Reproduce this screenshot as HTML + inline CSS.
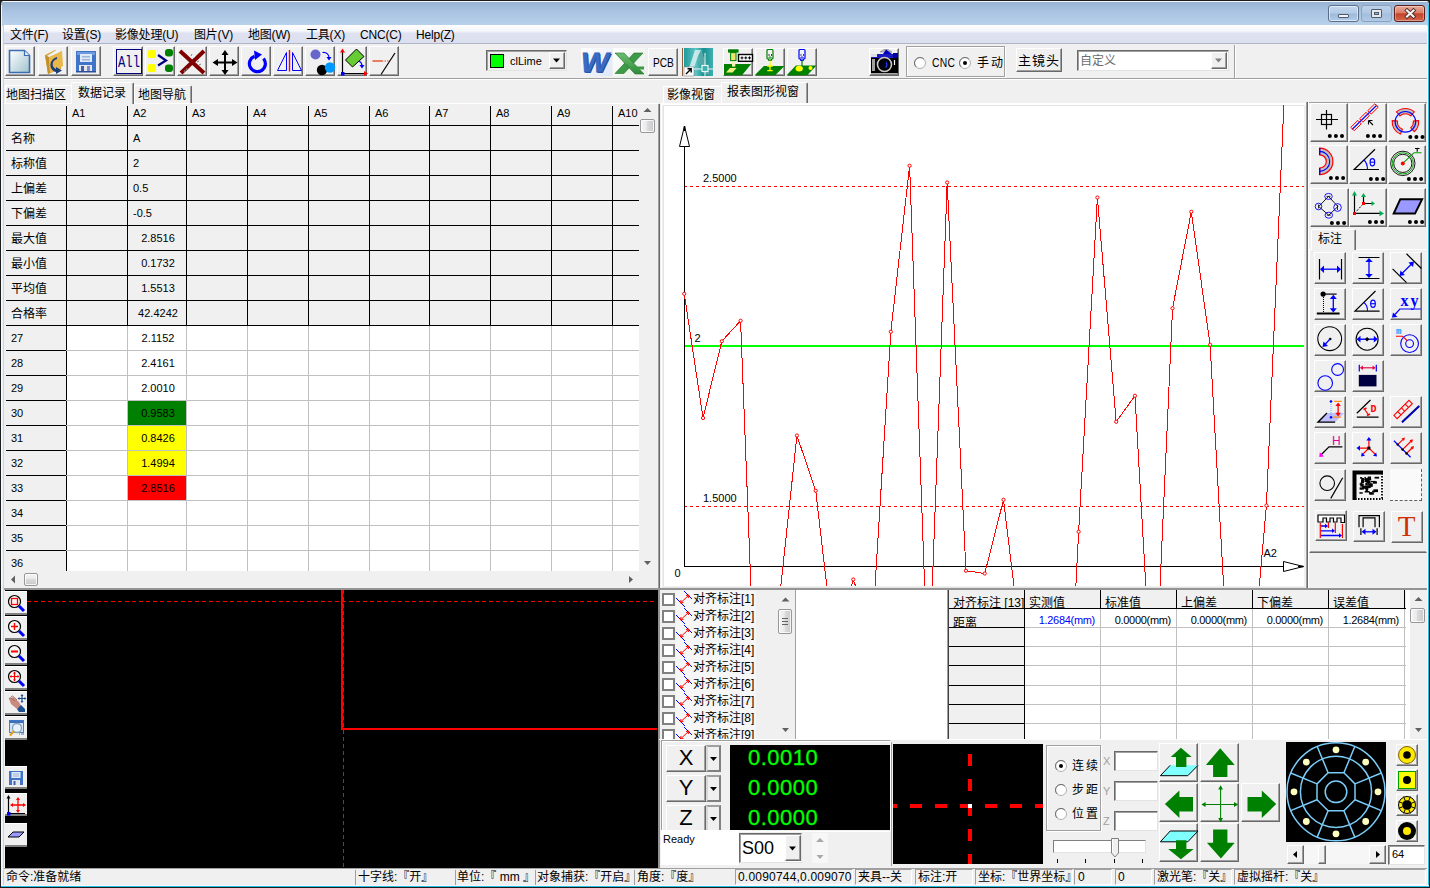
<!DOCTYPE html><html lang="zh"><head><meta charset="utf-8"><title>UI</title><style>
*{box-sizing:border-box;margin:0;padding:0}
html,body{width:1430px;height:888px;overflow:hidden}
body{position:relative;background:#f0f0f0;font-family:"Liberation Sans","Noto Sans CJK SC",sans-serif;font-size:12px;color:#000;line-height:1}
.a{position:absolute}
.t{position:absolute;white-space:nowrap;line-height:1}
.btn{position:absolute;background:#f0f0f0;border:1px solid;border-color:#fff #696969 #696969 #fff;box-shadow:inset -1px -1px 0 #a0a0a0}
.btn svg{position:absolute}
.sunk{position:absolute;border:1px solid;border-color:#a0a0a0 #fff #fff #a0a0a0}
svg{position:absolute;overflow:visible}
</style></head><body><div class="a" style="left:0px;top:0px;width:1430px;height:888px;background:#f0f0f0"></div><div class="a" style="left:0px;top:0px;width:1430px;height:8px;background:#1c1c1c"></div><div class="a" style="left:0px;top:0px;width:1430px;height:26px;background:linear-gradient(#1c1c1c 0,#1c1c1c 1px,#f4f8fc 1px,#f4f8fc 2px,#98b3d3 2px,#a9c3e1 45%,#bad2eb);border-radius:6px 6px 0 0"></div><div class="a" style="left:0px;top:0px;width:1px;height:888px;background:#1c1c1c"></div><div class="a" style="left:1px;top:5px;width:1px;height:21px;background:#f4f8fc"></div><div class="a" style="left:1px;top:26px;width:2px;height:862px;background:linear-gradient(90deg,#ffffff,#e4edf8)"></div><div class="a" style="left:3px;top:26px;width:1px;height:862px;background:#c3d5ea"></div><div class="a" style="left:1427px;top:26px;width:1px;height:862px;background:#f4f8fd"></div><div class="a" style="left:1428px;top:5px;width:1px;height:883px;background:#27c0e4"></div><div class="a" style="left:1429px;top:0px;width:1px;height:888px;background:#1c1c1c"></div><div class="a" style="left:1px;top:885px;width:1428px;height:1px;background:#f4f8fd"></div><div class="a" style="left:1px;top:886px;width:1428px;height:1px;background:#27c0e4"></div><div class="a" style="left:0px;top:887px;width:1430px;height:1px;background:#1c1c1c"></div><div class="a" style="left:1328px;top:5px;width:31px;height:17px;border:1px solid #5a6f8c;border-radius:3px;background:linear-gradient(#c3d6ec 0%,#b4cbe6 48%,#9dbadb 52%,#b2cae6 100%);box-shadow:inset 0 0 0 1px rgba(255,255,255,.55)"></div><div class="a" style="left:1338px;top:14px;width:11px;height:4px;background:#f4f4f4;border:1px solid #4a5a70;border-radius:1px"></div><div class="a" style="left:1361px;top:5px;width:31px;height:17px;border:1px solid #8aa2c0;border-radius:3px;background:linear-gradient(#bcd0e8 0%,#b0c7e3 48%,#a3bddc 52%,#b2cae6 100%)"></div><div class="a" style="left:1371px;top:9px;width:11px;height:9px;background:#e8e8e8;border:1px solid #4a5a70;border-radius:1px"></div><div class="a" style="left:1374px;top:12px;width:5px;height:3px;background:#9ab4d4;border:1px solid #4a5a70"></div><div class="a" style="left:1394px;top:5px;width:31px;height:17px;border:1px solid #5b1f1c;border-radius:3px;background:linear-gradient(#e9a99b 0%,#d9806c 45%,#c5422a 52%,#d4674c 100%);box-shadow:inset 0 0 0 1px rgba(255,255,255,.35)"></div><svg class="a" style="left:1403px;top:8px" width="14" height="11" viewBox="0 0 14 11" ><path d="M4 2.500 L10.500 8.500 M10.500 2.500 L4 8.500" stroke="#4a2a28" stroke-width="3.800" stroke-linecap="square"/><path d="M4 2.500 L10.500 8.500 M10.500 2.500 L4 8.500" stroke="#f4f4f4" stroke-width="2.200" stroke-linecap="square"/></svg><div class="a" style="left:4px;top:25px;width:1423px;height:19px;background:linear-gradient(#ffffff 0%,#f4f5fb 35%,#dfe2f0 45%,#dcdfee 100%);border-bottom:1px solid #b0b4c8"></div><div class="t" style="left:10px;top:29px;font-size:12px;letter-spacing:-.2px">文件(F)</div><div class="t" style="left:62px;top:29px;font-size:12px;letter-spacing:-.2px">设置(S)</div><div class="t" style="left:115px;top:29px;font-size:12px;letter-spacing:-.2px">影像处理(U)</div><div class="t" style="left:194px;top:29px;font-size:12px;letter-spacing:-.2px">图片(V)</div><div class="t" style="left:248px;top:29px;font-size:12px;letter-spacing:-.2px">地图(W)</div><div class="t" style="left:306px;top:29px;font-size:12px;letter-spacing:-.2px">工具(X)</div><div class="t" style="left:360px;top:29px;font-size:12px;letter-spacing:-.2px">CNC(C)</div><div class="t" style="left:416px;top:29px;font-size:12px;letter-spacing:-.2px">Help(Z)</div><div class="a" style="left:4px;top:78px;width:1423px;height:1px;background:#a0a0a0"></div><div class="a" style="left:4px;top:79px;width:1423px;height:1px;background:#ffffff"></div><div class="btn" style="left:5px;top:46px;width:30px;height:30px;"><svg style="left:-1px;top:-1px" width="30" height="30" viewBox="0 0 30 30" ><defs><linearGradient id="gdoc" x1="0" y1="0" x2="1" y2="1"><stop offset="0" stop-color="#ffffff"/><stop offset="1" stop-color="#9fc3cc"/></linearGradient></defs><path d="M4.5 4.5 H19.5 L24.5 9.5 V26.5 H4.5 Z" fill="url(#gdoc)" stroke="#3b6cb3" stroke-width="1.6"/><path d="M19.5 4.5 V9.5 H24.5" fill="#e8f2f6" stroke="#3b6cb3" stroke-width="1.2"/></svg></div><div class="btn" style="left:38px;top:46px;width:30px;height:30px;"><svg style="left:-1px;top:-1px" width="30" height="30" viewBox="0 0 30 30" ><path d="M7 9 L17 4 L24 6 L23 23 L10 28 Z" fill="#d9a63a"/><path d="M9 10 L20 3 L22 5 L21 22 L11 27 Z" fill="#eef3fa"/><path d="M11 11 L24 5 L25 20 L12 27 Z" fill="#e9b84a"/><path d="M7 9 L10 28 L12 27 L11 11 Z" fill="#c48f2a"/><path d="M19 13 C14 14 13 21 18 23 L18 21 L24 24.5 L18 28 L18 26 C10 24 11 13 19 11 Z" fill="#1f3f7a"/></svg></div><div class="btn" style="left:71px;top:46px;width:30px;height:30px;"><svg style="left:-1px;top:-1px" width="30" height="30" viewBox="0 0 30 30" ><rect x="5" y="5" width="20" height="21" fill="#3f74c8"/><rect x="6" y="6" width="18" height="3" fill="#6b9ae0"/><rect x="9" y="8" width="12" height="8" fill="#dfe9f7"/><rect x="11" y="10" width="8" height="1.5" fill="#9db4d6"/><rect x="11" y="13" width="8" height="1.5" fill="#9db4d6"/><rect x="8" y="19" width="13" height="7" fill="#e6e6ee"/><rect x="10" y="20" width="3" height="6" fill="#3f5fa8"/><rect x="16" y="20" width="3" height="6" fill="#7a8fc0"/><rect x="5" y="25" width="20" height="1.5" fill="#2b4f9a"/></svg></div><div class="btn" style="left:113px;top:46px;width:30px;height:30px;"><svg style="left:-1px;top:-1px" width="30" height="30" viewBox="0 0 30 30" ><rect x="3.5" y="3.5" width="25" height="24" fill="none" stroke="#000080" stroke-width="1"/><text x="16" y="21" font-family="Liberation Mono,monospace" font-size="16" fill="#000080" text-anchor="middle" textLength="22" lengthAdjust="spacingAndGlyphs">All</text></svg></div><div class="btn" style="left:145px;top:46px;width:30px;height:30px;"><svg style="left:-1px;top:-1px" width="30" height="30" viewBox="0 0 30 30" ><rect x="3" y="4" width="8" height="8" rx="1.5" fill="#ffff00"/><rect x="3" y="18" width="8" height="8" rx="1.5" fill="#ffff00"/><rect x="20" y="3" width="8" height="7.5" rx="3" fill="#008000"/><rect x="20" y="18.5" width="8" height="7.5" rx="3" fill="#008000"/><path d="M13 9 L21 14.5 L13 19.5" fill="none" stroke="#000080" stroke-width="2.2"/></svg></div><div class="btn" style="left:177px;top:46px;width:30px;height:30px;"><svg style="left:-1px;top:-1px" width="30" height="30" viewBox="0 0 30 30" ><path d="M3 5 L27 27 M27 5 L4 27" stroke="#800000" stroke-width="4"/><path d="M14 10l1-2M17 12l2-2M20 16l2-1M22 19l2-1M10 22l-1 2M8 24l-1 2" stroke="#808080" stroke-width="1"/></svg></div><div class="btn" style="left:209px;top:46px;width:30px;height:30px;"><svg style="left:-1px;top:-1px" width="30" height="30" viewBox="0 0 30 30" ><path d="M16 7 V26 M6 16.5 H26" stroke="#000" stroke-width="2"/><path d="M16 4 L19.5 9 H12.5 Z M16 29 L19.5 24 H12.5 Z M3.5 16.5 L9 13 V20 Z M28.5 16.5 L23 13 V20 Z" fill="#000"/></svg></div><div class="btn" style="left:241px;top:46px;width:30px;height:30px;"><svg style="left:-1px;top:-1px" width="30" height="30" viewBox="0 0 30 30" ><path d="M22.5 12.5 A8 8 0 1 1 13.5 10.2" fill="none" stroke="#0000ff" stroke-width="3.2"/><path d="M13 4.5 L21 8.5 L14 14 Z" fill="#0000ff"/></svg></div><div class="btn" style="left:273px;top:46px;width:30px;height:30px;"><svg style="left:-1px;top:-1px" width="30" height="30" viewBox="0 0 30 30" ><path d="M4.5 24.5 H13.5 V6.5 Z M19.5 6.5 V24.5 H28.5 Z" fill="none" stroke="#0000ff" stroke-width="1"/><path d="M16.5 4 V25.5" stroke="#ff0000" stroke-width="1.4"/></svg></div><div class="btn" style="left:305px;top:46px;width:30px;height:30px;"><svg style="left:-1px;top:-1px" width="30" height="30" viewBox="0 0 30 30" ><circle cx="10.5" cy="8.5" r="5" fill="#6666cc"/><circle cx="17" cy="24" r="5.2" fill="#000"/><circle cx="25" cy="21.5" r="5.2" fill="#0099ff"/><path d="M17.5 6.5 C22 6 24 9 24 12" fill="none" stroke="#0000ff" stroke-width="1.2"/><path d="M21.5 11 L26.5 11 L24 14.5 Z" fill="#0000ff"/></svg></div><div class="btn" style="left:337px;top:46px;width:30px;height:30px;"><svg style="left:-1px;top:-1px" width="30" height="30" viewBox="0 0 30 30" ><path d="M5.5 5 V27.5 H28" fill="none" stroke="#000" stroke-width="1.2"/><path d="M5.5 2.5 L8 6.5 H3 Z M31 27.5 L27 25 V30 Z" fill="#ff0000"/><rect x="4" y="26" width="3.5" height="3.5" fill="#0000ff"/><path d="M19.5 3 L27 10.5 L15.5 21 L8.5 14 Z" fill="#66cc33" stroke="#000" stroke-width="1"/><path d="M22 15 C24 16 25 18 25 20" fill="none" stroke="#0000ff" stroke-width="1.2"/><path d="M22.5 19 L27.5 19 L25 22.5 Z" fill="#0000ff"/></svg></div><div class="btn" style="left:369px;top:46px;width:30px;height:30px;"><svg style="left:-1px;top:-1px" width="30" height="30" viewBox="0 0 30 30" ><path d="M26 7 L12 28.5" stroke="#000" stroke-width="1.2"/><path d="M3.5 15 H13" stroke="#e03000" stroke-width="1.2"/><path d="M13 15 H20" stroke="#e03000" stroke-width="1.2" stroke-dasharray="1.3 1.3"/></svg></div><div class="a" style="left:486px;top:50px;width:81px;height:21px;border:1px solid;border-color:#696969 #e3e3e3 #e3e3e3 #696969;background:#f0f0f0;box-shadow:inset 1px 1px 0 #a0a0a0"></div><div class="a" style="left:490px;top:54px;width:14px;height:14px;background:#00ff00;border:1px solid #000"></div><div class="t" style="left:510px;top:56px;font-size:11px;">clLime</div><div class="btn" style="left:549px;top:52px;width:16px;height:17px;"><svg style="left:-1px;top:-1px" width="16" height="17" viewBox="0 0 16 17" ><path d="M4 6.5 H11 L7.5 10.5 Z" fill="#000"/></svg></div><div class="a" style="left:581px;top:48px;width:31px;height:28px;background:linear-gradient(135deg,#ffffff,#dfe6f6)"></div><div class="t" style="left:581px;top:49px;font-size:28px;font-weight:bold;font-style:italic;font-family:Liberation Sans,sans-serif;color:#3a6cc4;-webkit-text-stroke:.8px #3463b8;text-shadow:1px 1px 0 #1c428f;transform:scaleX(1.05);transform-origin:left top">W</div><div class="a" style="left:613px;top:48px;width:32px;height:28px;background:linear-gradient(135deg,#ffffff,#e6efe6)"></div><svg class="a" style="left:613px;top:48px" width="32" height="28" viewBox="0 0 32 28" ><defs><linearGradient id="gx" x1="0" y1="0" x2="0" y2="1"><stop offset="0" stop-color="#6cc070"/><stop offset="1" stop-color="#2f8a3a"/></linearGradient></defs><path d="M21 5 H30 L11 25.500 H2 Z" fill="#3d9a47" stroke="#2a6e30" stroke-width=".6"/><path d="M2 5 H11 L31 26 H22 Z" fill="url(#gx)" stroke="#2a6e30" stroke-width=".6"/><path d="M19 18.500 H31 V21.500 H22 Z" fill="#3d9a47"/></svg><div class="btn" style="left:648px;top:48px;width:30px;height:28px;"></div><div class="t" style="left:653px;top:56px;font-size:13px;transform:scaleX(.78);transform-origin:left top">PCB</div><div class="a" style="left:682px;top:48px;width:31px;height:28px;background:linear-gradient(90deg,#8a5a3a 0,#8a5a3a 1px,#f0f0f0 1px,#f0f0f0 2px,#1f9a9a 2px,#5fc4c4 45%,#1a8f8f 70%,#3fb0b0 100%)"></div><svg class="a" style="left:682px;top:48px" width="31" height="28" viewBox="0 0 31 28" ><path d="M5 26 L13 2 H19 L27 26 H22 L16 8 L10 26 Z" fill="#d8f0f0" opacity=".85"/><path d="M16 8 L22 26 H27 L19 2 Z" fill="#0f7f7f" opacity=".6"/><rect x="2" y="19" width="10" height="9" fill="#fff" stroke="#888" stroke-width=".6"/><path d="M4 26 L9 21 M5.5 20.8 H9.2 V24.5" stroke="#000" stroke-width="1.4" fill="none"/><path d="M12 21 H31 M23 5 V28" stroke="#e8f6f6" stroke-width="1"/><rect x="20" y="17.5" width="6" height="6" fill="#3fb0b0" stroke="#e8f6f6" stroke-width="1.2"/></svg><div class="btn" style="left:723px;top:48px;width:30px;height:28px;"><svg style="left:-1px;top:-1px" width="30" height="28" viewBox="0 0 30 28" ><path d="M1 16 H28.200 L19 27.200 H1 Z" fill="#008000"/><path d="M7 20 H13.600 L9.600 24.600 H3 Z" fill="#f0f080"/><rect x="5" y="1.300" width="10.600" height="3.300" fill="#008000"/><rect x="7.600" y="4.600" width="5.400" height="8" fill="#e8e870" stroke="#008000" stroke-width="1"/><rect x="9" y="14" width="3.300" height="4.600" fill="#f4f4b0"/><rect x="15.500" y="6.500" width="14" height="6.800" fill="#fff" stroke="#000" stroke-width="1.400"/><path d="M17.500 9.900 H20.500 M19 8.400 V11.400 M21.300 9.900 H24.300 M22.800 8.400 V11.400 M25 9.900 H28 M26.500 8.400 V11.400" stroke="#000" stroke-width="1"/></svg></div><div class="btn" style="left:755px;top:48px;width:30px;height:28px;"><svg style="left:-1px;top:-1px" width="30" height="28" viewBox="0 0 30 28" ><path d="M8.900 18 H29.500 L20.200 27.200 H-.400 Z" fill="#008000"/><rect x="12" y="1.500" width="6" height="9.500" rx="1" fill="#f4f4f4" stroke="#008000" stroke-width="1.200"/><path d="M13.500 7 h1 M16 7 h1" stroke="#000" stroke-width="1.300"/><path d="M13.500 9.500 Q15 8.300 16.500 9.500" stroke="#008000" stroke-width="1" fill="none"/><path d="M13.500 11 V12.500 H16.500 V11" stroke="#008000" stroke-width="1" fill="none"/><path d="M15 12.600 V23.200 M12.300 18 H17.700 M12.300 22.600 H17.700" stroke="#ffff00" stroke-width="1.300"/></svg></div><div class="btn" style="left:787px;top:48px;width:30px;height:28px;"><svg style="left:-1px;top:-1px" width="30" height="28" viewBox="0 0 30 28" ><path d="M8.900 17.400 H29.500 L20.200 27.200 H-.400 Z" fill="#008000"/><rect x="12" y="1.500" width="6" height="9.500" rx="1" fill="#f4f4f4" stroke="#0000ff" stroke-width="1.200"/><path d="M13.500 7 h1 M16 7 h1" stroke="#000080" stroke-width="1.300"/><path d="M13.500 9.500 Q15 8.300 16.500 9.500" stroke="#0000ff" stroke-width="1" fill="none"/><path d="M13.500 11 V12.500 H16.500 V11" stroke="#0000ff" stroke-width="1" fill="none"/><path d="M15 12.600 V18" stroke="#008000" stroke-width="1.200"/><ellipse cx="12.200" cy="20.600" rx="3.700" ry="2.900" fill="#ffff00"/><circle cx="23.500" cy="19.900" r="2" fill="#ffff00"/></svg></div><div class="btn" style="left:869px;top:48px;width:30px;height:28px;"><svg style="left:-1px;top:-1px" width="31" height="29" viewBox="0 0 31 29" ><path d="M11 4 L15 1.500 H19 L23 4 Z" fill="#c0c0c0" stroke="#808080" stroke-width=".6"/><path d="M17 1.500 L23 6 H14 Z" fill="#0000c0"/><rect x="2" y="6" width="27" height="4" fill="#1a1ac0"/><rect x="2" y="6" width="6" height="3" fill="#e0e0e0"/><rect x="2" y="10" width="27" height="15" fill="#000"/><rect x="3" y="11" width="3" height="12" fill="#a0a0a0"/><rect x="24" y="5" width="5" height="5" fill="#0000a0"/><circle cx="15.500" cy="16.500" r="7" fill="#000" stroke="#c8c8c8" stroke-width="1.600"/><circle cx="15.500" cy="16.500" r="4.300" fill="#000018"/><path d="M17 14.500 C18.500 16 18 18.500 16.500 19.500" stroke="#2040ff" stroke-width="1.200" fill="none"/><path d="M25.500 12 V17" stroke="#fff" stroke-width="1.200"/><path d="M2 26 H29" stroke="#606060" stroke-width="1"/></svg></div><div class="a" style="left:1234px;top:45px;width:1px;height:33px;background:#a0a0a0"></div><div class="a" style="left:1235px;top:45px;width:1px;height:33px;background:#fff"></div><div class="a" style="left:906px;top:46px;width:99px;height:31px;border:1px solid #a0a0a0;box-shadow:1px 1px 0 #fff, inset 1px 1px 0 #fff"></div><svg class="a" style="left:914px;top:57px" width="12" height="12" viewBox="0 0 12 12" ><circle cx="6" cy="6" r="5.5" fill="#fff" stroke="#b0b0b0" stroke-width="1"/><path d="M2.1 9.9 A5.5 5.5 0 0 1 9.9 2.1" fill="none" stroke="#707070" stroke-width="1"/></svg><div class="t" style="left:932px;top:57px;font-size:12px;transform:scaleX(.86);transform-origin:left top;letter-spacing:.3px">CNC</div><svg class="a" style="left:959px;top:57px" width="12" height="12" viewBox="0 0 12 12" ><circle cx="6" cy="6" r="5.5" fill="#fff" stroke="#b0b0b0" stroke-width="1"/><path d="M2.1 9.9 A5.5 5.5 0 0 1 9.9 2.1" fill="none" stroke="#707070" stroke-width="1"/><circle cx="6" cy="6" r="2" fill="#000"/></svg><div class="t" style="left:977px;top:57px;font-size:12px;letter-spacing:2px">手动</div><div class="btn" style="left:1016px;top:48px;width:46px;height:24px;"></div><div class="t" style="left:1018px;top:54px;font-size:13px;letter-spacing:1px">主镜头</div><div class="a" style="left:1077px;top:50px;width:152px;height:21px;border:1px solid;border-color:#696969 #e3e3e3 #e3e3e3 #696969;background:#fff;box-shadow:inset 1px 1px 0 #a0a0a0"></div><div class="t" style="left:1080px;top:55px;font-size:12px;color:#6d6d6d">自定义</div><div class="btn" style="left:1211px;top:52px;width:16px;height:17px;"><svg style="left:-1px;top:-1px" width="16" height="17" viewBox="0 0 16 17" ><path d="M4 6.500 H11 L7.500 10.500 Z" fill="#808080"/></svg></div><div class="a" style="left:4px;top:103px;width:654px;height:1px;background:#fff"></div><div class="a" style="left:5px;top:85px;width:67px;height:18px;border-top:1px solid #fff;border-left:1px solid #fff;border-radius:2px 0 0 0"></div><div class="t" style="left:6px;top:89px;font-size:12px;">地图扫描区</div><div class="a" style="left:71px;top:82px;width:63px;height:22px;background:#f0f0f0;border:1px solid;border-color:#fff #696969 transparent #fff;border-bottom:none;box-shadow:inset -1px 0 0 #a0a0a0;border-radius:2px 2px 0 0"></div><div class="t" style="left:78px;top:87px;font-size:12px;">数据记录</div><div class="a" style="left:134px;top:85px;width:58px;height:18px;background:#f0f0f0;border:1px solid;border-color:#fff #696969 transparent #fff;border-bottom:none;box-shadow:inset -1px 0 0 #a0a0a0;border-radius:2px 2px 0 0"></div><div class="t" style="left:138px;top:89px;font-size:12px;">地图导航</div><div class="a" style="left:5px;top:104px;width:634px;height:467px;background:#fff"></div><div class="a" style="left:5px;top:104px;width:634px;height:221px;background:#f0f0f0"></div><div class="a" style="left:5px;top:104px;width:61px;height:467px;background:#f0f0f0"></div><div class="t" style="left:72px;top:108px;font-size:11px;">A1</div><div class="t" style="left:133px;top:108px;font-size:11px;">A2</div><div class="t" style="left:192px;top:108px;font-size:11px;">A3</div><div class="t" style="left:253px;top:108px;font-size:11px;">A4</div><div class="t" style="left:314px;top:108px;font-size:11px;">A5</div><div class="t" style="left:375px;top:108px;font-size:11px;">A6</div><div class="t" style="left:435px;top:108px;font-size:11px;">A7</div><div class="t" style="left:496px;top:108px;font-size:11px;">A8</div><div class="t" style="left:557px;top:108px;font-size:11px;">A9</div><div class="t" style="left:618px;top:108px;font-size:11px;">A10</div><div class="a" style="left:66px;top:106px;width:1px;height:219px;background:#000"></div><div class="a" style="left:66px;top:325px;width:1px;height:246px;background:#c0c0c0"></div><div class="a" style="left:127px;top:106px;width:1px;height:219px;background:#000"></div><div class="a" style="left:127px;top:325px;width:1px;height:246px;background:#c0c0c0"></div><div class="a" style="left:186px;top:106px;width:1px;height:219px;background:#000"></div><div class="a" style="left:186px;top:325px;width:1px;height:246px;background:#c0c0c0"></div><div class="a" style="left:247px;top:106px;width:1px;height:219px;background:#000"></div><div class="a" style="left:247px;top:325px;width:1px;height:246px;background:#c0c0c0"></div><div class="a" style="left:308px;top:106px;width:1px;height:219px;background:#000"></div><div class="a" style="left:308px;top:325px;width:1px;height:246px;background:#c0c0c0"></div><div class="a" style="left:369px;top:106px;width:1px;height:219px;background:#000"></div><div class="a" style="left:369px;top:325px;width:1px;height:246px;background:#c0c0c0"></div><div class="a" style="left:429px;top:106px;width:1px;height:219px;background:#000"></div><div class="a" style="left:429px;top:325px;width:1px;height:246px;background:#c0c0c0"></div><div class="a" style="left:490px;top:106px;width:1px;height:219px;background:#000"></div><div class="a" style="left:490px;top:325px;width:1px;height:246px;background:#c0c0c0"></div><div class="a" style="left:551px;top:106px;width:1px;height:219px;background:#000"></div><div class="a" style="left:551px;top:325px;width:1px;height:246px;background:#c0c0c0"></div><div class="a" style="left:612px;top:106px;width:1px;height:219px;background:#000"></div><div class="a" style="left:612px;top:325px;width:1px;height:246px;background:#c0c0c0"></div><div class="a" style="left:66px;top:325px;width:1px;height:246px;background:#000"></div><div class="a" style="left:6px;top:125px;width:633px;height:1px;background:#000"></div><div class="a" style="left:6px;top:150px;width:633px;height:1px;background:#000"></div><div class="a" style="left:6px;top:175px;width:633px;height:1px;background:#000"></div><div class="a" style="left:6px;top:200px;width:633px;height:1px;background:#000"></div><div class="a" style="left:6px;top:225px;width:633px;height:1px;background:#000"></div><div class="a" style="left:6px;top:250px;width:633px;height:1px;background:#000"></div><div class="a" style="left:6px;top:275px;width:633px;height:1px;background:#000"></div><div class="a" style="left:6px;top:300px;width:633px;height:1px;background:#000"></div><div class="a" style="left:6px;top:325px;width:633px;height:1px;background:#000"></div><div class="a" style="left:6px;top:350px;width:60px;height:1px;background:#000"></div><div class="a" style="left:66px;top:350px;width:573px;height:1px;background:#c0c0c0"></div><div class="a" style="left:6px;top:375px;width:60px;height:1px;background:#000"></div><div class="a" style="left:66px;top:375px;width:573px;height:1px;background:#c0c0c0"></div><div class="a" style="left:6px;top:400px;width:60px;height:1px;background:#000"></div><div class="a" style="left:66px;top:400px;width:573px;height:1px;background:#c0c0c0"></div><div class="a" style="left:6px;top:425px;width:60px;height:1px;background:#000"></div><div class="a" style="left:66px;top:425px;width:573px;height:1px;background:#c0c0c0"></div><div class="a" style="left:6px;top:450px;width:60px;height:1px;background:#000"></div><div class="a" style="left:66px;top:450px;width:573px;height:1px;background:#c0c0c0"></div><div class="a" style="left:6px;top:475px;width:60px;height:1px;background:#000"></div><div class="a" style="left:66px;top:475px;width:573px;height:1px;background:#c0c0c0"></div><div class="a" style="left:6px;top:500px;width:60px;height:1px;background:#000"></div><div class="a" style="left:66px;top:500px;width:573px;height:1px;background:#c0c0c0"></div><div class="a" style="left:6px;top:525px;width:60px;height:1px;background:#000"></div><div class="a" style="left:66px;top:525px;width:573px;height:1px;background:#c0c0c0"></div><div class="a" style="left:6px;top:550px;width:60px;height:1px;background:#000"></div><div class="a" style="left:66px;top:550px;width:573px;height:1px;background:#c0c0c0"></div><div class="t" style="left:11px;top:133px;font-size:12px;">名称</div><div class="t" style="left:133px;top:133px;font-size:11px;">A</div><div class="t" style="left:11px;top:158px;font-size:12px;">标称值</div><div class="t" style="left:133px;top:158px;font-size:11px;">2</div><div class="t" style="left:11px;top:183px;font-size:12px;">上偏差</div><div class="t" style="left:133px;top:183px;font-size:11px;">0.5</div><div class="t" style="left:11px;top:208px;font-size:12px;">下偏差</div><div class="t" style="left:133px;top:208px;font-size:11px;">-0.5</div><div class="t" style="left:11px;top:233px;font-size:12px;">最大值</div><div class="t" style="left:128px;top:233px;font-size:11px;width:60px;text-align:center">2.8516</div><div class="t" style="left:11px;top:258px;font-size:12px;">最小值</div><div class="t" style="left:128px;top:258px;font-size:11px;width:60px;text-align:center">0.1732</div><div class="t" style="left:11px;top:283px;font-size:12px;">平均值</div><div class="t" style="left:128px;top:283px;font-size:11px;width:60px;text-align:center">1.5513</div><div class="t" style="left:11px;top:308px;font-size:12px;">合格率</div><div class="t" style="left:128px;top:308px;font-size:11px;width:60px;text-align:center">42.4242</div><div class="t" style="left:11px;top:333px;font-size:11px;">27</div><div class="t" style="left:128px;top:333px;font-size:11px;width:60px;text-align:center">2.1152</div><div class="t" style="left:11px;top:358px;font-size:11px;">28</div><div class="t" style="left:128px;top:358px;font-size:11px;width:60px;text-align:center">2.4161</div><div class="t" style="left:11px;top:383px;font-size:11px;">29</div><div class="t" style="left:128px;top:383px;font-size:11px;width:60px;text-align:center">2.0010</div><div class="t" style="left:11px;top:408px;font-size:11px;">30</div><div class="a" style="left:128px;top:401px;width:58px;height:24px;background:#008000"></div><div class="t" style="left:128px;top:408px;font-size:11px;width:60px;text-align:center">0.9583</div><div class="t" style="left:11px;top:433px;font-size:11px;">31</div><div class="a" style="left:128px;top:426px;width:58px;height:24px;background:#ffff00"></div><div class="t" style="left:128px;top:433px;font-size:11px;width:60px;text-align:center">0.8426</div><div class="t" style="left:11px;top:458px;font-size:11px;">32</div><div class="a" style="left:128px;top:451px;width:58px;height:24px;background:#ffff00"></div><div class="t" style="left:128px;top:458px;font-size:11px;width:60px;text-align:center">1.4994</div><div class="t" style="left:11px;top:483px;font-size:11px;">33</div><div class="a" style="left:128px;top:476px;width:58px;height:24px;background:#ff0000"></div><div class="t" style="left:128px;top:483px;font-size:11px;width:60px;text-align:center">2.8516</div><div class="t" style="left:11px;top:508px;font-size:11px;">34</div><div class="t" style="left:11px;top:533px;font-size:11px;">35</div><div class="t" style="left:11px;top:558px;font-size:11px;">36</div><div class="a" style="left:639px;top:104px;width:17px;height:467px;background:#f0f0f0"></div><svg class="a" style="left:639px;top:102px" width="17" height="17" viewBox="0 0 17 17" ><path d="M4.500 10 L8.500 6 L12.500 10 Z" fill="#606060"/></svg><div class="a" style="left:640px;top:119px;width:15px;height:14px;border:1px solid #979797;border-radius:2px;background:linear-gradient(90deg,#f5f5f5,#e9e9eb 45%,#d9dadc 50%,#c9cacc);box-shadow:inset 0 0 0 1px rgba(255,255,255,.8)"></div><svg class="a" style="left:639px;top:554px" width="17" height="17" viewBox="0 0 17 17" ><path d="M5 7 L8.500 11 L12 7 Z" fill="#606060"/></svg><div class="a" style="left:5px;top:571px;width:634px;height:17px;background:#f0f0f0"></div><svg class="a" style="left:5px;top:571px" width="17" height="17" viewBox="0 0 17 17" ><path d="M10 4.500 L6 8.500 L10 12.500 Z" fill="#606060"/></svg><div class="a" style="left:24px;top:573px;width:14px;height:13px;border:1px solid #979797;border-radius:2px;background:linear-gradient(#f5f5f5,#e9e9eb 45%,#d9dadc 50%,#c9cacc);box-shadow:inset 0 0 0 1px rgba(255,255,255,.8)"></div><svg class="a" style="left:622px;top:571px" width="17" height="17" viewBox="0 0 17 17" ><path d="M7 5 L11 8.500 L7 12 Z" fill="#606060"/></svg><div class="a" style="left:658px;top:104px;width:1px;height:485px;background:#a0a0a0"></div><div class="a" style="left:659px;top:104px;width:1px;height:485px;background:#696969"></div><div class="a" style="left:661px;top:103px;width:648px;height:1px;background:#fff"></div><div class="a" style="left:663px;top:86px;width:60px;height:17px;border-top:1px solid #fff;border-left:1px solid #fff;border-radius:2px 0 0 0"></div><div class="t" style="left:667px;top:89px;font-size:12px;">影像视窗</div><div class="a" style="left:721px;top:82px;width:87px;height:21px;background:#f0f0f0;border:1px solid;border-color:#fff #696969 transparent #fff;border-bottom:none;box-shadow:inset -1px 0 0 #a0a0a0;border-radius:2px 2px 0 0"></div><div class="t" style="left:727px;top:86px;font-size:12px;">报表图形视窗</div><div class="a" style="left:661px;top:104px;width:645px;height:484px;background:#f0f0f0;border:1px solid;border-color:#fff #f0f0f0 #e3e3e3 #fff"></div><div class="a" style="left:663px;top:105px;width:641px;height:481px;background:#fff;border-left:1px solid #e3e3e3;border-top:1px solid #e3e3e3"></div><div class="a" style="left:663px;top:105px;width:641px;height:481px;overflow:hidden"><svg style="left:0;top:0;overflow:hidden" width="641" height="481" viewBox="0 0 641 481"><g shape-rendering="crispEdges"><line x1="21" y1="81.5" x2="641" y2="81.5" stroke="#ff0000" stroke-width="1" stroke-dasharray="3 3"/><line x1="21" y1="401.5" x2="641" y2="401.5" stroke="#ff0000" stroke-width="1" stroke-dasharray="3 3"/><rect x="21" y="240" width="620" height="2" fill="#00ff00"/><line x1="21.5" y1="41" x2="21.5" y2="462" stroke="#000" stroke-width="1"/><line x1="21" y1="461.5" x2="621" y2="461.5" stroke="#000" stroke-width="1"/></g><path d="M21.5 21 L26.5 41.5 H16.5 Z" fill="none" stroke="#000" stroke-width="1"/><path d="M21.5 21 V26" stroke="#000" stroke-width="1.5"/><path d="M640.5 461.5 L620.5 456.5 V466.5 Z" fill="none" stroke="#000" stroke-width="1"/><path d="M640.5 461.5 H635" stroke="#000" stroke-width="1.5"/><polyline points="21.25,188.75 40.03,313.00 58.81,236.25 77.59,215.75 96.37,700.00 115.15,506.30 133.93,330.50 152.71,385.75 171.49,547.20 190.27,474.50 209.05,528.80 227.83,226.75 246.61,60.75 265.39,587.00 284.17,77.50 302.95,465.75 321.73,468.50 340.51,394.75 359.29,550.00 378.07,795.00 396.85,793.00 415.63,426.75 434.41,92.50 453.19,316.75 471.97,290.75 490.75,620.00 509.53,203.25 528.31,106.75 547.09,239.75 565.87,574.30 584.65,611.40 603.43,400.50 622.21,-31.50" fill="none" stroke="#ff0000" stroke-width="1" shape-rendering="crispEdges"/><circle cx="21.25" cy="188.75" r="1.6" fill="#fff" stroke="#ff0000" stroke-width="1"/><circle cx="40.03" cy="313.00" r="1.6" fill="#fff" stroke="#ff0000" stroke-width="1"/><circle cx="58.81" cy="236.25" r="1.6" fill="#fff" stroke="#ff0000" stroke-width="1"/><circle cx="77.59" cy="215.75" r="1.6" fill="#fff" stroke="#ff0000" stroke-width="1"/><circle cx="133.93" cy="330.50" r="1.6" fill="#fff" stroke="#ff0000" stroke-width="1"/><circle cx="152.71" cy="385.75" r="1.6" fill="#fff" stroke="#ff0000" stroke-width="1"/><circle cx="190.27" cy="474.50" r="1.6" fill="#fff" stroke="#ff0000" stroke-width="1"/><circle cx="227.83" cy="226.75" r="1.6" fill="#fff" stroke="#ff0000" stroke-width="1"/><circle cx="246.61" cy="60.75" r="1.6" fill="#fff" stroke="#ff0000" stroke-width="1"/><circle cx="284.17" cy="77.50" r="1.6" fill="#fff" stroke="#ff0000" stroke-width="1"/><circle cx="302.95" cy="465.75" r="1.6" fill="#fff" stroke="#ff0000" stroke-width="1"/><circle cx="321.73" cy="468.50" r="1.6" fill="#fff" stroke="#ff0000" stroke-width="1"/><circle cx="340.51" cy="394.75" r="1.6" fill="#fff" stroke="#ff0000" stroke-width="1"/><circle cx="415.63" cy="426.75" r="1.6" fill="#fff" stroke="#ff0000" stroke-width="1"/><circle cx="434.41" cy="92.50" r="1.6" fill="#fff" stroke="#ff0000" stroke-width="1"/><circle cx="453.19" cy="316.75" r="1.6" fill="#fff" stroke="#ff0000" stroke-width="1"/><circle cx="471.97" cy="290.75" r="1.6" fill="#fff" stroke="#ff0000" stroke-width="1"/><circle cx="509.53" cy="203.25" r="1.6" fill="#fff" stroke="#ff0000" stroke-width="1"/><circle cx="528.31" cy="106.75" r="1.6" fill="#fff" stroke="#ff0000" stroke-width="1"/><circle cx="547.09" cy="239.75" r="1.6" fill="#fff" stroke="#ff0000" stroke-width="1"/><circle cx="603.43" cy="400.50" r="1.6" fill="#fff" stroke="#ff0000" stroke-width="1"/><text x="40" y="77" font-family="Liberation Sans,sans-serif" font-size="11" fill="#000">2.5000</text><text x="40" y="397" font-family="Liberation Sans,sans-serif" font-size="11" fill="#000">1.5000</text><text x="31.5" y="237" font-family="Liberation Sans,sans-serif" font-size="11" fill="#000">2</text><text x="11.5" y="472" font-family="Liberation Sans,sans-serif" font-size="11" fill="#000">0</text><text x="600.5" y="452" font-family="Liberation Sans,sans-serif" font-size="11" fill="#000">A2</text></svg></div><div class="a" style="left:1306px;top:102px;width:1px;height:486px;background:#a0a0a0"></div><div class="a" style="left:1307px;top:102px;width:1px;height:486px;background:#696969"></div><div class="a" style="left:1308px;top:102px;width:1px;height:486px;background:#fff"></div><div class="a" style="left:1309px;top:102px;width:118px;height:1px;background:#a0a0a0"></div><div class="btn" style="left:1310px;top:103px;width:38px;height:39px;border-color:#fff #696969 #696969 #fff;box-shadow:inset -1px -1px 0 #a0a0a0"><svg style="left:-1px;top:-1px" width="38" height="39" viewBox="0 0 38 39" ><path d="M6 16.500 H28 M16.500 7 V26.500" stroke="#000" stroke-width="1.200"/><rect x="11.500" y="11.500" width="10" height="10" fill="none" stroke="#000" stroke-width="1.200"/><circle cx="19.8" cy="33" r="2" fill="#000"/><circle cx="25.9" cy="33" r="2" fill="#000"/><circle cx="32.0" cy="33" r="2" fill="#000"/></svg></div><div class="btn" style="left:1349px;top:103px;width:38px;height:39px;border-color:#fff #696969 #696969 #fff;box-shadow:inset -1px -1px 0 #a0a0a0"><svg style="left:-1px;top:-1px" width="38" height="39" viewBox="0 0 38 39" ><path d="M3 26.500 L28 2" stroke="#0000ff" stroke-width="1.100"/><path d="M1.8 24.3 L8.8 17.4 L12.2 20.9 L5.2 27.7 Z" fill="none" stroke="#ff0000" stroke-width="1"/><path d="M10.6 15.7 L17.1 9.3 L20.4 12.8 L13.9 19.2 Z" fill="none" stroke="#ff0000" stroke-width="1"/><path d="M18.8 7.6 L25.8 0.8 L29.2 4.2 L22.2 11.1 Z" fill="none" stroke="#ff0000" stroke-width="1"/><path d="M19.500 17.500 L24 22 M19.500 17.500 V21.500 M19.500 17.500 H23.500" stroke="#000" stroke-width="1.100" fill="none"/><circle cx="18.9" cy="33" r="2" fill="#000"/><circle cx="25.0" cy="33" r="2" fill="#000"/><circle cx="31.1" cy="33" r="2" fill="#000"/></svg></div><div class="btn" style="left:1388px;top:103px;width:38px;height:39px;border-color:#fff #696969 #696969 #fff;box-shadow:inset -1px -1px 0 #a0a0a0"><svg style="left:-1px;top:-1px" width="38" height="39" viewBox="0 0 38 39" ><path d="M8.5 8.9 A13.3 13.3 0 0 1 26.3 8.9 L22.8 12.9 A8 8 0 0 0 12.0 12.9 Z" fill="#c0c0c0" stroke="#ff0000" stroke-width="1.100"/><path d="M30.6 17.6 A13.3 13.3 0 0 1 26.3 28.7 L22.8 24.7 A8 8 0 0 0 25.4 18.1 Z" fill="#c0c0c0" stroke="#ff0000" stroke-width="1.100"/><path d="M12.4 31.1 A13.3 13.3 0 0 1 4.2 17.6 L9.4 18.1 A8 8 0 0 0 14.4 26.2 Z" fill="#c0c0c0" stroke="#ff0000" stroke-width="1.100"/><circle cx="17.400" cy="18.800" r="10.300" fill="none" stroke="#0000ff" stroke-width="1.100"/><circle cx="22.3" cy="34.1" r="2" fill="#000"/><circle cx="28.4" cy="34.1" r="2" fill="#000"/><circle cx="34.5" cy="34.1" r="2" fill="#000"/></svg></div><div class="btn" style="left:1310px;top:145px;width:38px;height:39px;border-color:#fff #696969 #696969 #fff;box-shadow:inset -1px -1px 0 #a0a0a0"><svg style="left:-1px;top:-1px" width="38" height="39" viewBox="0 0 38 39" ><path d="M9.700 3.200 A13.200 13.200 0 0 1 9.700 29.600 V23 A6.600 6.600 0 0 0 9.700 9.800 Z" fill="#c0c0c0" stroke="#ff0000" stroke-width="1.200"/><path d="M9.700 6.400 A10 10 0 0 1 9.700 26.400" fill="none" stroke="#0000ff" stroke-width="1.100"/><path d="M9.700 3 V10 M9.700 23 V30" stroke="#0000ff" stroke-width="1.300"/><circle cx="20.9" cy="33.1" r="2" fill="#000"/><circle cx="27.0" cy="33.1" r="2" fill="#000"/><circle cx="33.1" cy="33.1" r="2" fill="#000"/></svg></div><div class="btn" style="left:1349px;top:145px;width:38px;height:39px;border-color:#fff #696969 #696969 #fff;box-shadow:inset -1px -1px 0 #a0a0a0"><svg style="left:-1px;top:-1px" width="38" height="39" viewBox="0 0 38 39" ><path d="M26 4.200 L5.200 24.500 H30" fill="none" stroke="#000" stroke-width="1.200"/><path d="M15 15 C17.500 17.500 18.500 20.500 18.500 24.500" fill="none" stroke="#0000ff" stroke-width="1.100"/><ellipse cx="23.400" cy="17.200" rx="2.300" ry="3.600" fill="none" stroke="#0000ff" stroke-width="1.200"/><path d="M21 17.200 H25.800" stroke="#0000ff" stroke-width="1.100"/><circle cx="21.9" cy="34.1" r="2" fill="#000"/><circle cx="28.0" cy="34.1" r="2" fill="#000"/><circle cx="34.1" cy="34.1" r="2" fill="#000"/></svg></div><div class="btn" style="left:1388px;top:145px;width:38px;height:39px;border-color:#fff #696969 #696969 #fff;box-shadow:inset -1px -1px 0 #a0a0a0"><svg style="left:-1px;top:-1px" width="38" height="39" viewBox="0 0 38 39" ><circle cx="14.800" cy="18.400" r="12.200" fill="none" stroke="#000" stroke-width=".900"/><circle cx="14.800" cy="18.400" r="9.100" fill="none" stroke="#000" stroke-width=".900"/><circle cx="14.800" cy="18.400" r="10.600" fill="none" stroke="#00a000" stroke-width="1"/><path d="M14.800 18.400 L26 7.700 H33.600" fill="none" stroke="#00a000" stroke-width="1.100"/><circle cx="14.800" cy="18.400" r="2" fill="#ff0000"/><path d="M27 3.500 H31.500 M29.200 3.500 V6.700" stroke="#000" stroke-width="1.100"/><circle cx="20.9" cy="34.1" r="2" fill="#000"/><circle cx="27.0" cy="34.1" r="2" fill="#000"/><circle cx="33.1" cy="34.1" r="2" fill="#000"/></svg></div><div class="btn" style="left:1310px;top:188px;width:39px;height:39px;border-color:#fff #696969 #696969 #fff;box-shadow:inset -1px -1px 0 #a0a0a0"><svg style="left:-1px;top:-1px" width="39" height="39" viewBox="0 0 39 39" ><path d="M18.500 8.400 L27.900 18.500 L18.800 27.200 L8.700 18.500 Z" fill="none" stroke="#000" stroke-width=".900"/><ellipse cx="18.500" cy="8.400" rx="3.800" ry="3" fill="none" stroke="#0000ff" stroke-width=".900"/><ellipse cx="18.800" cy="27.200" rx="3.800" ry="3" fill="none" stroke="#0000ff" stroke-width=".900"/><ellipse cx="8.500" cy="18.500" rx="3.300" ry="3.300" fill="none" stroke="#0000ff" stroke-width=".900"/><ellipse cx="27.500" cy="19.500" rx="3.800" ry="3.900" fill="none" stroke="#0000ff" stroke-width=".900"/><path d="M16.500 8.400 H20.500 M16.800 27.200 H20.800 M8.500 16.500 V20.500 M27.500 17 V22" stroke="#000" stroke-width=".800"/><circle cx="21.9" cy="35" r="2" fill="#000"/><circle cx="28.0" cy="35" r="2" fill="#000"/><circle cx="34.1" cy="35" r="2" fill="#000"/></svg></div><div class="btn" style="left:1349px;top:188px;width:38px;height:39px;border-color:#fff #696969 #696969 #fff;box-shadow:inset -1px -1px 0 #a0a0a0"><svg style="left:-1px;top:-1px" width="38" height="39" viewBox="0 0 38 39" ><path d="M5.500 6 V25.400 H31" fill="none" stroke="#000" stroke-width="1.200"/><path d="M14.500 8 V15.500 H23" fill="none" stroke="#000" stroke-width="1.200"/><path d="M5.500 25.400 L14.500 15.500" stroke="#000" stroke-width="1" stroke-dasharray="2 1.500"/><path d="M5.500 3 L8 7.500 H3 Z M14.500 5 L17 9 H12 Z M26 15.500 L22.500 13 V18 Z M35 25.400 L30.500 22.500 V28.300 Z" fill="#00b050"/><rect x="4" y="24" width="3" height="3" fill="#ff0000"/><rect x="13" y="14" width="3" height="3" fill="#ff0000"/><circle cx="20.9" cy="34" r="2" fill="#000"/><circle cx="27.0" cy="34" r="2" fill="#000"/><circle cx="33.1" cy="34" r="2" fill="#000"/></svg></div><div class="btn" style="left:1388px;top:188px;width:38px;height:39px;border-color:#fff #696969 #696969 #fff;box-shadow:inset -1px -1px 0 #a0a0a0"><svg style="left:-1px;top:-1px" width="38" height="39" viewBox="0 0 38 39" ><path d="M12.300 11.200 H34.100 L27 25.600 H5.700 Z" fill="#9999ff" stroke="#000" stroke-width="2"/><circle cx="21.9" cy="34" r="2" fill="#000"/><circle cx="28.0" cy="34" r="2" fill="#000"/><circle cx="34.1" cy="34" r="2" fill="#000"/></svg></div><div class="a" style="left:1309px;top:249px;width:118px;height:304px;border:1px solid;border-color:#fff #f0f0f0 #696969 #fff;box-shadow:inset 0 -1px 0 #a0a0a0"></div><div class="a" style="left:1311px;top:229px;width:45px;height:21px;background:#f0f0f0;border:1px solid;border-color:#fff #696969 transparent #fff;border-bottom:none;box-shadow:inset -1px 0 0 #a0a0a0;border-radius:2px 2px 0 0"></div><div class="t" style="left:1318px;top:233px;font-size:12px;">标注</div><div class="btn" style="left:1314px;top:252px;width:32px;height:32px"><svg style="left:-1px;top:-1px" width="32" height="32" viewBox="0 0 32 32" ><path d="M5.500 7 V27.500 M27.500 7 V27.500" stroke="#000" stroke-width="1.200"/><path d="M8 17.200 H25" stroke="#0000ff" stroke-width="1.300"/><path d="M6 17.200 L10 13.500 V21 Z M27 17.200 L23 13.500 V21 Z" fill="#0000ff"/></svg></div><div class="btn" style="left:1352px;top:252px;width:32px;height:32px"><svg style="left:-1px;top:-1px" width="32" height="32" viewBox="0 0 32 32" ><path d="M6.500 5.500 H27.500 M6.500 26.500 H27.500" stroke="#000" stroke-width="1.200"/><path d="M17 8 V24" stroke="#0000ff" stroke-width="1.300"/><path d="M17 6 L13.300 10 H20.700 Z M17 26 L13.300 22 H20.700 Z" fill="#0000ff"/></svg></div><div class="btn" style="left:1390px;top:252px;width:32px;height:32px"><svg style="left:-1px;top:-1px" width="32" height="32" viewBox="0 0 32 32" ><path d="M16.500 1.800 L31.400 16.500 M2.600 16.800 L16.500 30.700" stroke="#000" stroke-width="1.200"/><path d="M11 22.500 L22.500 11" stroke="#0000ff" stroke-width="1.300"/><path d="M9.500 24 L10.500 18.500 L15 23 Z M24 9.500 L18.500 10.500 L23 15 Z" fill="#0000ff"/></svg></div><div class="btn" style="left:1314px;top:288px;width:32px;height:32px"><svg style="left:-1px;top:-1px" width="32" height="32" viewBox="0 0 32 32" ><circle cx="9.100" cy="6.100" r="2.600" fill="#000"/><path d="M9 6.100 H22.600" stroke="#000" stroke-width="1.200"/><path d="M9.500 8.500 V24.500" stroke="#000" stroke-width="1" stroke-dasharray="1 1" shape-rendering="crispEdges"/><path d="M2.800 25.500 H25.600" stroke="#000" stroke-width="2"/><path d="M19.300 9 V22" stroke="#0000ff" stroke-width="1.300"/><path d="M19.300 6.800 L15.800 11 H22.800 Z M19.300 24.500 L15.800 20.300 H22.800 Z" fill="#0000ff"/></svg></div><div class="btn" style="left:1352px;top:288px;width:32px;height:32px"><svg style="left:-1px;top:-1px" width="32" height="32" viewBox="0 0 32 32" ><path d="M23.500 3 L3 23.100 H27.600" fill="none" stroke="#000" stroke-width="1.200"/><path d="M12 14.500 C14.500 16.500 15.500 19.500 15.500 23" fill="none" stroke="#0000ff" stroke-width="1.100"/><ellipse cx="21" cy="15.700" rx="2.300" ry="3.600" fill="none" stroke="#0000ff" stroke-width="1.200"/><path d="M18.700 15.700 H23.300" stroke="#0000ff" stroke-width="1.100"/></svg></div><div class="btn" style="left:1390px;top:288px;width:32px;height:32px"><svg style="left:-1px;top:-1px" width="32" height="32" viewBox="0 0 32 32" ><text x="10.500" y="18" font-family="Liberation Serif,serif" font-weight="bold" font-size="16" fill="#0000ff" letter-spacing="2">xy</text><path d="M30.700 21 H9.900 L3.500 28" fill="none" stroke="#0000ff" stroke-width="1.200"/><path d="M2 29.600 L3 24.500 L7.500 29 Z" fill="#0000ff"/></svg></div><div class="btn" style="left:1314px;top:324px;width:32px;height:32px"><svg style="left:-1px;top:-1px" width="32" height="32" viewBox="0 0 32 32" ><circle cx="15.700" cy="14.700" r="11.900" fill="none" stroke="#000" stroke-width="1.100"/><circle cx="16.200" cy="15" r="1.300" fill="#000"/><path d="M16 15 L11 20.500" stroke="#0000ff" stroke-width="1.200"/><path d="M8.500 23 L9.500 17.500 L14 22 Z" fill="#0000ff"/></svg></div><div class="btn" style="left:1352px;top:324px;width:32px;height:32px"><svg style="left:-1px;top:-1px" width="32" height="32" viewBox="0 0 32 32" ><circle cx="15.100" cy="15.200" r="11" fill="none" stroke="#000" stroke-width="1.100"/><path d="M7 15.200 H23" stroke="#0000ff" stroke-width="1.400"/><path d="M4.500 15.200 L8.500 11.800 V18.600 Z M25.800 15.200 L21.800 11.800 V18.600 Z" fill="#0000ff"/><path d="M15.100 13 L17.300 15.200 L15.100 17.400 L12.900 15.200 Z" fill="#000"/></svg></div><div class="btn" style="left:1390px;top:324px;width:32px;height:32px"><svg style="left:-1px;top:-1px" width="32" height="32" viewBox="0 0 32 32" ><circle cx="19.600" cy="19.600" r="8.900" fill="none" stroke="#0000ff" stroke-width="1.100"/><circle cx="19.600" cy="19.600" r="3.900" fill="none" stroke="#0000ff" stroke-width="1.100"/><path d="M5.900 12.200 H12.500 L17 16.500" fill="none" stroke="#ff0000" stroke-width="1.100"/><text x="6" y="10.400" font-family="Liberation Mono,monospace" font-weight="bold" font-size="9" fill="#00a0ff">m</text></svg></div><div class="btn" style="left:1314px;top:360px;width:32px;height:32px"><svg style="left:-1px;top:-1px" width="32" height="32" viewBox="0 0 32 32" ><circle cx="23.600" cy="9.500" r="5.900" fill="none" stroke="#0000ff" stroke-width="1.100"/><circle cx="11.200" cy="23" r="7.300" fill="none" stroke="#0000ff" stroke-width="1.100"/></svg></div><div class="btn" style="left:1352px;top:360px;width:32px;height:32px"><svg style="left:-1px;top:-1px" width="32" height="32" viewBox="0 0 32 32" ><path d="M7.300 4.800 V11.400 M24.300 4.800 V11.400" stroke="#0000ff" stroke-width="1.200"/><path d="M9 7.800 H22.500" stroke="#e0104a" stroke-width="1.200"/><path d="M7.800 7.800 L11 5.500 V10.100 Z M23.800 7.800 L20.600 5.500 V10.100 Z" fill="#e0104a"/><rect x="6.800" y="14.900" width="17.700" height="11.500" fill="#000040"/></svg></div><div class="btn" style="left:1314px;top:396px;width:32px;height:32px"><svg style="left:-1px;top:-1px" width="32" height="32" viewBox="0 0 32 32" ><path d="M13 17 H30.200 L21.100 26.200 H3.900 Z" fill="#c0c0ff"/><path d="M13 17 L3.900 26.200 H21.100" fill="none" stroke="#000" stroke-width="1.300"/><path d="M17 6 V21" stroke="#60b0ff" stroke-width="1" stroke-dasharray="1 1"/><path d="M20 5.400 H27.700 M18.500 21.200 H27" stroke="#ff9020" stroke-width="1.300"/><path d="M24.100 8 V19" stroke="#ff0000" stroke-width="1.300"/><path d="M24.100 6.400 L21.300 10 H26.900 Z M24.100 20.400 L21.300 16.800 H26.900 Z" fill="#ff0000"/><path d="M17 3.800 L18.600 5.400 L17 7 L15.400 5.400 Z M17 19.700 L18.600 21.300 L17 22.900 L15.400 21.300 Z" fill="#0000ff"/></svg></div><div class="btn" style="left:1352px;top:396px;width:32px;height:32px"><svg style="left:-1px;top:-1px" width="32" height="32" viewBox="0 0 32 32" ><path d="M4.800 17.200 L18.500 4 M4.800 21.100 H26.600" stroke="#000" stroke-width="1.200"/><path d="M12.500 13 L16.500 19" stroke="#ff0000" stroke-width="1.200"/><path d="M11.500 13.500 L14.500 12 M15 19.500 L18 18" stroke="#ff0000" stroke-width="1.500"/><text x="18.500" y="16" font-family="Liberation Mono,monospace" font-weight="bold" font-size="10" fill="#ff0000">D</text></svg></div><div class="btn" style="left:1390px;top:396px;width:32px;height:32px"><svg style="left:-1px;top:-1px" width="32" height="32" viewBox="0 0 32 32" ><path d="M12 26.200 L29.200 9.900" stroke="#000080" stroke-width="2"/><path d="M12.300 26.500 L29.500 10.200" stroke="#0000ff" stroke-width="1"/><path d="M3.900 19.300 L19 4.400 L22.300 7.700 L7.100 22.600 Z" fill="none" stroke="#ff0000" stroke-width="1.100"/><path d="M7.7 15.6 l3.300 3.300" stroke="#ff0000" stroke-width="1.100"/><path d="M11.4 11.9 l3.300 3.300" stroke="#ff0000" stroke-width="1.100"/><path d="M15.2 8.1 l3.300 3.300" stroke="#ff0000" stroke-width="1.100"/></svg></div><div class="btn" style="left:1314px;top:432px;width:32px;height:32px"><svg style="left:-1px;top:-1px" width="32" height="32" viewBox="0 0 32 32" ><text x="18" y="13.400" font-family="Liberation Sans,sans-serif" font-size="12" fill="#e000a0">H</text><path d="M28.400 14.900 H15 L7.400 22.500" fill="none" stroke="#000" stroke-width="1.200"/><path d="M5.300 25 L5.800 20.300 L10 24.600 Z" fill="#ff00ff"/></svg></div><div class="btn" style="left:1352px;top:432px;width:32px;height:32px"><svg style="left:-1px;top:-1px" width="32" height="32" viewBox="0 0 32 32" ><path d="M16.900 16.100 V8 M16.900 16.100 H7 M16.900 16.100 L11 22 M16.900 16.100 L23 22" stroke="#ff0000" stroke-width="1.200"/><rect x="15.400" y="14.600" width="3" height="3" fill="#000"/><path d="M16.900 5 L14.300 8.500 H19.500 Z M4.500 16.100 L8 13.500 V18.700 Z M9 24.500 L9.800 20.500 L13 23.700 Z M25 24.500 L24.200 20.500 L21 23.700 Z" fill="#0000ff"/></svg></div><div class="btn" style="left:1390px;top:432px;width:32px;height:32px"><svg style="left:-1px;top:-1px" width="32" height="32" viewBox="0 0 32 32" ><path d="M3.900 8.800 L20.600 25.300" stroke="#0000ff" stroke-width="1.200"/><path d="M7.700 12.600 L13.500 6.800 M12.500 17.600 L21.500 8.800 M16.500 21.500 L22.500 15.500" stroke="#ff0000" stroke-width="1.200"/><path d="M15 5.400 L11.500 6.400 L14 9 Z M23 7.300 L19.500 8.300 L22 10.900 Z M24 14 L20.500 15 L23 17.600 Z" fill="#ff0000"/><circle cx="7.700" cy="12.600" r="1.200" fill="#000"/><circle cx="12.500" cy="17.600" r="1.200" fill="#000"/><circle cx="16.500" cy="21.500" r="1.200" fill="#000"/></svg></div><div class="btn" style="left:1314px;top:469px;width:32px;height:32px"><svg style="left:-1px;top:-1px" width="32" height="32" viewBox="0 0 32 32" ><circle cx="13.200" cy="14.200" r="7.300" fill="none" stroke="#000" stroke-width="1.100"/><path d="M28.700 8.700 L16.800 29.400" stroke="#000" stroke-width="1.200"/></svg></div><div class="a" style="left:1352px;top:469px;width:32px;height:32px;background:#f4f4f4"><svg style="left:0px;top:0px" width="32" height="32" viewBox="0 0 32 32" ><path d="M2.500 31 V3.500 H31" fill="none" stroke="#000" stroke-width="4"/><path d="M30 4 V31 M3 30 H31" stroke="#000" stroke-width="1.800" stroke-dasharray="1.500 1.500"/><rect x="12.2" y="9.6" width="3.8" height="1.3" fill="#000"/><rect x="15.6" y="13.2" width="1.7" height="2.2" fill="#000"/><rect x="7.6" y="14.4" width="1.7" height="1.4" fill="#000"/><rect x="13.8" y="21.1" width="1.9" height="1.6" fill="#000"/><rect x="17.0" y="23.1" width="3.5" height="2.0" fill="#000"/><rect x="22.6" y="7.8" width="4.5" height="1.8" fill="#000"/><rect x="9.3" y="9.0" width="2.6" height="2.8" fill="#000"/><rect x="9.9" y="16.9" width="3.7" height="1.9" fill="#000"/><rect x="15.8" y="8.1" width="1.7" height="1.6" fill="#000"/><rect x="17.9" y="14.3" width="2.6" height="2.4" fill="#000"/><rect x="14.3" y="12.1" width="4.3" height="2.6" fill="#000"/><rect x="10.9" y="16.8" width="3.3" height="3.0" fill="#000"/><rect x="18.7" y="11.9" width="4.9" height="1.4" fill="#000"/><rect x="13.7" y="19.9" width="2.0" height="2.2" fill="#000"/><rect x="7.6" y="18.4" width="4.2" height="2.3" fill="#000"/><rect x="21.0" y="12.3" width="3.9" height="2.4" fill="#000"/><rect x="16.3" y="14.8" width="4.4" height="3.1" fill="#000"/><rect x="14.6" y="18.3" width="1.7" height="2.6" fill="#000"/><rect x="17.4" y="23.9" width="4.4" height="1.8" fill="#000"/><rect x="13.2" y="18.4" width="1.6" height="2.1" fill="#000"/><rect x="9.7" y="9.0" width="1.7" height="2.7" fill="#000"/><rect x="9.1" y="11.2" width="2.9" height="2.9" fill="#000"/><rect x="8.3" y="14.6" width="3.4" height="3.0" fill="#000"/><rect x="20.1" y="21.7" width="2.5" height="2.0" fill="#000"/><rect x="12.7" y="22.0" width="4.9" height="1.5" fill="#000"/><rect x="9.8" y="10.9" width="2.3" height="2.2" fill="#000"/><rect x="16.4" y="11.5" width="1.5" height="2.0" fill="#000"/><rect x="12.9" y="16.6" width="4.8" height="2.6" fill="#000"/><rect x="15.2" y="17.5" width="3.9" height="1.3" fill="#000"/><rect x="21.4" y="20.3" width="4.6" height="2.8" fill="#000"/><rect x="13.3" y="13.8" width="1.9" height="2.5" fill="#000"/><rect x="8.0" y="8.1" width="2.2" height="1.5" fill="#000"/><rect x="12.4" y="7.9" width="1.5" height="1.5" fill="#000"/><rect x="8.6" y="13.2" width="1.6" height="2.9" fill="#000"/><rect x="16.8" y="9.5" width="2.4" height="1.9" fill="#000"/><rect x="12.8" y="9.1" width="4.5" height="3.2" fill="#000"/><rect x="14.5" y="15.2" width="1.8" height="1.4" fill="#000"/><rect x="12.5" y="11.5" width="4.4" height="1.5" fill="#000"/><rect x="7.4" y="23.2" width="3.3" height="1.5" fill="#000"/><rect x="15.7" y="7.5" width="3.3" height="3.2" fill="#000"/></svg></div><div class="a" style="left:1390px;top:469px;width:32px;height:32px;background:#fafafa;border-right:1px dashed #606060;border-bottom:1px dashed #606060"></div><div class="btn" style="left:1315px;top:510px;width:32px;height:31px"><svg style="left:-1px;top:-1px" width="32" height="31" viewBox="0 0 32 31" ><path d="M3 11.500 V5 H29.500 V12.500 H26 V8 H22 V12 H18.500 V8 H15 V12 H11.500 V8 H8 V12 H3 Z" fill="#fff" stroke="#000" stroke-width="1.200"/><path d="M5.300 13 V28 M13.400 12.500 V18 M20.300 13 V23 M27.400 14 V28" stroke="#ff0000" stroke-width="1.200"/><path d="M6 16 H11 M6 20.800 H18 M6 25.500 H25" stroke="#0000ff" stroke-width="1.300"/><path d="M13 16 L10 13.800 V18.200 Z M20 20.800 L17 18.600 V23 Z M27 25.500 L24 23.300 V27.700 Z" fill="#0000ff"/></svg></div><div class="btn" style="left:1353px;top:511px;width:32px;height:31px"><svg style="left:-1px;top:-1px" width="32" height="31" viewBox="0 0 32 31" ><path d="M6 16.200 V4.600 H26.400 V16.200 M10.100 16.200 V6.900 H22 V16.200" fill="none" stroke="#000" stroke-width="1.200"/><path d="M7.900 17.200 V24 M24.100 17.200 V24" stroke="#000" stroke-width="1.200"/><path d="M11 20.800 H21" stroke="#0000ff" stroke-width="1.300"/><path d="M8.500 20.800 L12.500 17.800 V23.800 Z M23.500 20.800 L19.500 17.800 V23.800 Z" fill="#0000ff"/></svg></div><div class="btn" style="left:1391px;top:511px;width:32px;height:32px"><svg style="left:-1px;top:-1px" width="32" height="32" viewBox="0 0 32 32" ><text x="15.500" y="25" font-family="Liberation Serif,serif" font-size="29" fill="#d03000" text-anchor="middle">T</text></svg></div><div class="a" style="left:5px;top:590px;width:653px;height:279px;background:#000"></div><svg class="a" style="left:5px;top:590px" width="652" height="279" viewBox="0 0 652 279" ><g shape-rendering="crispEdges"><line x1="22" y1="11.500" x2="652" y2="11.500" stroke="#ff0000" stroke-width="1" stroke-dasharray="4 3"/><rect x="336" y="0" width="2" height="140" fill="#ff0000"/><rect x="336" y="138" width="316" height="2" fill="#ff0000"/><line x1="338.500" y1="0" x2="338.500" y2="279" stroke="#ff0000" stroke-width="1" stroke-dasharray="4 3"/></g></svg><div class="a" style="left:5px;top:591px;width:22px;height:24px;background:#f0f0f0;border-bottom:2px solid #808080;border-top:1px solid #fff"><svg style="left:0px;top:0px" width="22" height="22" viewBox="0 0 22 22" ><circle cx="9.500" cy="9.500" r="6" fill="#f8f8f8" stroke="#000" stroke-width="1.200"/><path d="M14 14 L19 19" stroke="#0000ff" stroke-width="3"/><rect x="6.500" y="6.500" width="6" height="6" fill="none" stroke="#ff0000" stroke-width="1.300"/></svg></div><div class="a" style="left:5px;top:616px;width:22px;height:24px;background:#f0f0f0;border-bottom:2px solid #808080;border-top:1px solid #fff"><svg style="left:0px;top:0px" width="22" height="22" viewBox="0 0 22 22" ><circle cx="9.500" cy="9.500" r="6" fill="#f8f8f8" stroke="#000" stroke-width="1.200"/><path d="M14 14 L19 19" stroke="#0000ff" stroke-width="3"/><path d="M6 9.500 H13 M9.500 6 V13" stroke="#ff0000" stroke-width="1.400"/></svg></div><div class="a" style="left:5px;top:641px;width:22px;height:24px;background:#f0f0f0;border-bottom:2px solid #808080;border-top:1px solid #fff"><svg style="left:0px;top:0px" width="22" height="22" viewBox="0 0 22 22" ><circle cx="9.500" cy="9.500" r="6" fill="#f8f8f8" stroke="#000" stroke-width="1.200"/><path d="M14 14 L19 19" stroke="#0000ff" stroke-width="3"/><path d="M6 9.500 H13" stroke="#ff0000" stroke-width="2"/></svg></div><div class="a" style="left:5px;top:666px;width:22px;height:24px;background:#f0f0f0;border-bottom:2px solid #808080;border-top:1px solid #fff"><svg style="left:0px;top:0px" width="22" height="22" viewBox="0 0 22 22" ><circle cx="9.500" cy="9.500" r="6" fill="#f8f8f8" stroke="#000" stroke-width="1.200"/><path d="M14 14 L19 19" stroke="#0000ff" stroke-width="3"/><path d="M5.500 9.500 H13.500 M9.500 5.500 V13.500" stroke="#ff0000" stroke-width="1.200"/><path d="M9.500 4.500 L11 6.500 H8 Z M9.500 14.500 L11 12.500 H8 Z M4.500 9.500 L6.500 8 V11 Z M14.500 9.500 L12.500 8 V11 Z" fill="#ff0000"/></svg></div><div class="a" style="left:5px;top:691px;width:22px;height:24px;background:#f0f0f0;border-bottom:2px solid #808080;border-top:1px solid #fff"><svg style="left:0px;top:0px" width="22" height="22" viewBox="0 0 22 22" ><path d="M4 7 L8 5 L14 10 L16 14 L12 17 L6 12 Z" fill="#c98a7f"/><path d="M4 7 L5 5.500 L10 9 M6 5 L7.500 4 L12 8" stroke="#a86a60" stroke-width="1" fill="none"/><path d="M12 17 L16 13 L20 17 V20 H14 Z" fill="#1f4f8f"/><path d="M17 3 V10 M13.500 6.500 H20.500" stroke="#1f4f8f" stroke-width="1.200"/><path d="M17 2 L18.500 4 H15.500 Z M17 11 L18.500 9 H15.500 Z M12.500 6.500 L14.500 5 V8 Z M21.500 6.500 L19.500 5 V8 Z" fill="#1f4f8f"/></svg></div><div class="a" style="left:5px;top:716px;width:22px;height:24px;background:#f0f0f0;border-bottom:2px solid #808080;border-top:1px solid #fff"><svg style="left:0px;top:0px" width="22" height="22" viewBox="0 0 22 22" ><rect x="4.500" y="3.500" width="14" height="12" fill="#cfe4f7" stroke="#4a7fc0" stroke-width="1"/><rect x="4.500" y="3.500" width="14" height="2.500" fill="#3b6fc0"/><circle cx="12" cy="11" r="4.500" fill="#e8f4ff" stroke="#8aa0b8" stroke-width="1.300"/><path d="M9 14 L5 18.500" stroke="#e0a020" stroke-width="2.200"/><path d="M16 17 H19 M14 17 H15" stroke="#3b6fc0" stroke-width="1"/></svg></div><div class="a" style="left:5px;top:766px;width:22px;height:23px;background:#f0f0f0;border-bottom:2px solid #808080;border-top:1px solid #fff"><svg style="left:0px;top:0px" width="22" height="21" viewBox="0 0 22 21" ><rect x="4" y="4" width="14" height="14" fill="#3f74c8"/><rect x="6.500" y="5" width="9" height="6" fill="#dfe9f7"/><path d="M8 7 H14 M8 9 H14" stroke="#9db4d6" stroke-width="1"/><rect x="7" y="13" width="8" height="5" fill="#e6e6ee"/><rect x="8.500" y="14" width="2" height="4" fill="#3f5fa8"/></svg></div><div class="a" style="left:5px;top:793px;width:22px;height:23px;background:#f0f0f0;border-bottom:2px solid #808080;border-top:1px solid #fff"><svg style="left:0px;top:0px" width="22" height="21" viewBox="0 0 22 21" ><path d="M3.500 3 V19.500 H20" fill="none" stroke="#000" stroke-width="1.200"/><path d="M3.500 1 L5.500 4.500 H1.500 Z" fill="#000"/><rect x="2" y="18" width="3.500" height="3.500" fill="#0000ff"/><path d="M13 5 V17 M7 11 H19" stroke="#ff0000" stroke-width="1.300"/><path d="M13 3 L15 6 H11 Z M13 19 L15 16 H11 Z M5 11 L8 9 V13 Z M21 11 L18 9 V13 Z" fill="#ff0000"/></svg></div><div class="a" style="left:5px;top:823px;width:22px;height:24px;background:#f0f0f0;border-bottom:2px solid #808080;border-top:1px solid #fff"><svg style="left:0px;top:0px" width="22" height="22" viewBox="0 0 22 22" ><path d="M8 8 H19 L14 13 H3 Z" fill="#9999ff" stroke="#000" stroke-width="1"/></svg></div><div class="a" style="left:658px;top:590px;width:2px;height:279px;background:#949494"></div><div class="a" style="left:4px;top:588px;width:1423px;height:2px;background:#949494"></div><div class="a" style="left:660px;top:590px;width:134px;height:149px;background:#f0f0f0;overflow:hidden"></div><div class="a" style="left:660px;top:590px;width:117px;height:149px;overflow:hidden"><div class="a" style="left:16px;top:1px;width:80px;height:17px;background:#f6f6f6"></div><div class="a" style="left:2px;top:3px;width:13px;height:13px;background:#fff;border:2px solid #808080"></div><svg style="left:16px;top:1px" width="16" height="17" viewBox="0 0 16 17" ><path d="M8 0 L16 8 M0 7 L9 16" stroke="#0000ff" stroke-width="1"/><path d="M5 11.500 L12.500 4.500" stroke="#ff0000" stroke-width="1"/><path d="M4.500 12 L5 9 M4.500 12 L7.500 11.500 M13 4 L12.500 7 M13 4 L10 4.500" stroke="#ff0000" stroke-width="1" fill="none"/></svg><div class="t" style="left:33px;top:3px;font-size:12px">对齐标注[1]</div><div class="a" style="left:16px;top:18px;width:80px;height:17px;background:#f6f6f6"></div><div class="a" style="left:2px;top:20px;width:13px;height:13px;background:#fff;border:2px solid #808080"></div><svg style="left:16px;top:18px" width="16" height="17" viewBox="0 0 16 17" ><path d="M8 0 L16 8 M0 7 L9 16" stroke="#0000ff" stroke-width="1"/><path d="M5 11.500 L12.500 4.500" stroke="#ff0000" stroke-width="1"/><path d="M4.500 12 L5 9 M4.500 12 L7.500 11.500 M13 4 L12.500 7 M13 4 L10 4.500" stroke="#ff0000" stroke-width="1" fill="none"/></svg><div class="t" style="left:33px;top:20px;font-size:12px">对齐标注[2]</div><div class="a" style="left:16px;top:35px;width:80px;height:17px;background:#f6f6f6"></div><div class="a" style="left:2px;top:37px;width:13px;height:13px;background:#fff;border:2px solid #808080"></div><svg style="left:16px;top:35px" width="16" height="17" viewBox="0 0 16 17" ><path d="M8 0 L16 8 M0 7 L9 16" stroke="#0000ff" stroke-width="1"/><path d="M5 11.500 L12.500 4.500" stroke="#ff0000" stroke-width="1"/><path d="M4.500 12 L5 9 M4.500 12 L7.500 11.500 M13 4 L12.500 7 M13 4 L10 4.500" stroke="#ff0000" stroke-width="1" fill="none"/></svg><div class="t" style="left:33px;top:37px;font-size:12px">对齐标注[3]</div><div class="a" style="left:16px;top:52px;width:80px;height:17px;background:#f6f6f6"></div><div class="a" style="left:2px;top:54px;width:13px;height:13px;background:#fff;border:2px solid #808080"></div><svg style="left:16px;top:52px" width="16" height="17" viewBox="0 0 16 17" ><path d="M8 0 L16 8 M0 7 L9 16" stroke="#0000ff" stroke-width="1"/><path d="M5 11.500 L12.500 4.500" stroke="#ff0000" stroke-width="1"/><path d="M4.500 12 L5 9 M4.500 12 L7.500 11.500 M13 4 L12.500 7 M13 4 L10 4.500" stroke="#ff0000" stroke-width="1" fill="none"/></svg><div class="t" style="left:33px;top:54px;font-size:12px">对齐标注[4]</div><div class="a" style="left:16px;top:69px;width:80px;height:17px;background:#f6f6f6"></div><div class="a" style="left:2px;top:71px;width:13px;height:13px;background:#fff;border:2px solid #808080"></div><svg style="left:16px;top:69px" width="16" height="17" viewBox="0 0 16 17" ><path d="M8 0 L16 8 M0 7 L9 16" stroke="#0000ff" stroke-width="1"/><path d="M5 11.500 L12.500 4.500" stroke="#ff0000" stroke-width="1"/><path d="M4.500 12 L5 9 M4.500 12 L7.500 11.500 M13 4 L12.500 7 M13 4 L10 4.500" stroke="#ff0000" stroke-width="1" fill="none"/></svg><div class="t" style="left:33px;top:71px;font-size:12px">对齐标注[5]</div><div class="a" style="left:16px;top:86px;width:80px;height:17px;background:#f6f6f6"></div><div class="a" style="left:2px;top:88px;width:13px;height:13px;background:#fff;border:2px solid #808080"></div><svg style="left:16px;top:86px" width="16" height="17" viewBox="0 0 16 17" ><path d="M8 0 L16 8 M0 7 L9 16" stroke="#0000ff" stroke-width="1"/><path d="M5 11.500 L12.500 4.500" stroke="#ff0000" stroke-width="1"/><path d="M4.500 12 L5 9 M4.500 12 L7.500 11.500 M13 4 L12.500 7 M13 4 L10 4.500" stroke="#ff0000" stroke-width="1" fill="none"/></svg><div class="t" style="left:33px;top:88px;font-size:12px">对齐标注[6]</div><div class="a" style="left:16px;top:103px;width:80px;height:17px;background:#f6f6f6"></div><div class="a" style="left:2px;top:105px;width:13px;height:13px;background:#fff;border:2px solid #808080"></div><svg style="left:16px;top:103px" width="16" height="17" viewBox="0 0 16 17" ><path d="M8 0 L16 8 M0 7 L9 16" stroke="#0000ff" stroke-width="1"/><path d="M5 11.500 L12.500 4.500" stroke="#ff0000" stroke-width="1"/><path d="M4.500 12 L5 9 M4.500 12 L7.500 11.500 M13 4 L12.500 7 M13 4 L10 4.500" stroke="#ff0000" stroke-width="1" fill="none"/></svg><div class="t" style="left:33px;top:105px;font-size:12px">对齐标注[7]</div><div class="a" style="left:16px;top:120px;width:80px;height:17px;background:#f6f6f6"></div><div class="a" style="left:2px;top:122px;width:13px;height:13px;background:#fff;border:2px solid #808080"></div><svg style="left:16px;top:120px" width="16" height="17" viewBox="0 0 16 17" ><path d="M8 0 L16 8 M0 7 L9 16" stroke="#0000ff" stroke-width="1"/><path d="M5 11.500 L12.500 4.500" stroke="#ff0000" stroke-width="1"/><path d="M4.500 12 L5 9 M4.500 12 L7.500 11.500 M13 4 L12.500 7 M13 4 L10 4.500" stroke="#ff0000" stroke-width="1" fill="none"/></svg><div class="t" style="left:33px;top:122px;font-size:12px">对齐标注[8]</div><div class="a" style="left:16px;top:137px;width:80px;height:17px;background:#f6f6f6"></div><div class="a" style="left:2px;top:139px;width:13px;height:13px;background:#fff;border:2px solid #808080"></div><svg style="left:16px;top:137px" width="16" height="17" viewBox="0 0 16 17" ><path d="M8 0 L16 8 M0 7 L9 16" stroke="#0000ff" stroke-width="1"/><path d="M5 11.500 L12.500 4.500" stroke="#ff0000" stroke-width="1"/><path d="M4.500 12 L5 9 M4.500 12 L7.500 11.500 M13 4 L12.500 7 M13 4 L10 4.500" stroke="#ff0000" stroke-width="1" fill="none"/></svg><div class="t" style="left:33px;top:139px;font-size:12px">对齐标注[9]</div></div><div class="a" style="left:777px;top:590px;width:17px;height:149px;background:#f0f0f0"></div><svg class="a" style="left:777px;top:590px" width="17" height="17" viewBox="0 0 17 17" ><path d="M4.500 11.500 L8.500 7.500 L12.500 11.500 Z" fill="#606060"/></svg><div class="a" style="left:778px;top:609px;width:14px;height:25px;border:1px solid #979797;border-radius:2px;background:linear-gradient(90deg,#f5f5f5,#e9e9eb 45%,#d9dadc 50%,#c9cacc);box-shadow:inset 0 0 0 1px rgba(255,255,255,.8)"></div><svg class="a" style="left:778px;top:609px" width="14" height="25" viewBox="0 0 14 25" ><path d="M4 9.500 H10 M4 12.500 H10 M4 15.500 H10" stroke="#606060" stroke-width="1"/></svg><svg class="a" style="left:777px;top:722px" width="17" height="17" viewBox="0 0 17 17" ><path d="M5 6 L8.500 10 L12 6 Z" fill="#606060"/></svg><div class="a" style="left:794px;top:590px;width:1px;height:149px;background:#f0f0f0"></div><div class="a" style="left:795px;top:590px;width:1px;height:149px;background:#a0a0a0"></div><div class="a" style="left:796px;top:590px;width:151px;height:149px;background:#fff"></div><div class="a" style="left:947px;top:590px;width:1px;height:149px;background:#a0a0a0"></div><div class="a" style="left:948px;top:590px;width:462px;height:149px;background:#fff;overflow:hidden"></div><div class="a" style="left:948px;top:590px;width:458px;height:18px;background:#f0f0f0"></div><div class="a" style="left:948px;top:590px;width:76px;height:149px;background:#f0f0f0"></div><div class="a" style="left:1024px;top:590px;width:1px;height:18px;background:#000"></div><div class="a" style="left:1024px;top:608px;width:1px;height:131px;background:#c0c0c0"></div><div class="a" style="left:1100px;top:590px;width:1px;height:18px;background:#000"></div><div class="a" style="left:1100px;top:608px;width:1px;height:131px;background:#c0c0c0"></div><div class="a" style="left:1176px;top:590px;width:1px;height:18px;background:#000"></div><div class="a" style="left:1176px;top:608px;width:1px;height:131px;background:#c0c0c0"></div><div class="a" style="left:1252px;top:590px;width:1px;height:18px;background:#000"></div><div class="a" style="left:1252px;top:608px;width:1px;height:131px;background:#c0c0c0"></div><div class="a" style="left:1328px;top:590px;width:1px;height:18px;background:#000"></div><div class="a" style="left:1328px;top:608px;width:1px;height:131px;background:#c0c0c0"></div><div class="a" style="left:1404px;top:590px;width:1px;height:18px;background:#000"></div><div class="a" style="left:1404px;top:608px;width:1px;height:131px;background:#c0c0c0"></div><div class="a" style="left:1024px;top:590px;width:1px;height:149px;background:#000"></div><div class="a" style="left:948px;top:608px;width:458px;height:1px;background:#000"></div><div class="a" style="left:948px;top:627px;width:76px;height:1px;background:#000"></div><div class="a" style="left:1025px;top:627px;width:381px;height:1px;background:#c0c0c0"></div><div class="a" style="left:948px;top:646px;width:76px;height:1px;background:#000"></div><div class="a" style="left:1025px;top:646px;width:381px;height:1px;background:#c0c0c0"></div><div class="a" style="left:948px;top:665px;width:76px;height:1px;background:#000"></div><div class="a" style="left:1025px;top:665px;width:381px;height:1px;background:#c0c0c0"></div><div class="a" style="left:948px;top:685px;width:76px;height:1px;background:#000"></div><div class="a" style="left:1025px;top:685px;width:381px;height:1px;background:#c0c0c0"></div><div class="a" style="left:948px;top:704px;width:76px;height:1px;background:#000"></div><div class="a" style="left:1025px;top:704px;width:381px;height:1px;background:#c0c0c0"></div><div class="a" style="left:948px;top:723px;width:76px;height:1px;background:#000"></div><div class="a" style="left:1025px;top:723px;width:381px;height:1px;background:#c0c0c0"></div><div class="a" style="left:948px;top:590px;width:1px;height:149px;background:#404040"></div><div class="a" style="left:949px;top:590px;width:75px;height:18px;overflow:hidden"><div class="t" style="left:4px;top:7px;font-size:12px">对齐标注 [13]</div></div><div class="a" style="left:1025px;top:590px;width:75px;height:18px;overflow:hidden"><div class="t" style="left:4px;top:7px;font-size:12px">实测值</div></div><div class="a" style="left:1101px;top:590px;width:75px;height:18px;overflow:hidden"><div class="t" style="left:4px;top:7px;font-size:12px">标准值</div></div><div class="a" style="left:1177px;top:590px;width:75px;height:18px;overflow:hidden"><div class="t" style="left:4px;top:7px;font-size:12px">上偏差</div></div><div class="a" style="left:1253px;top:590px;width:75px;height:18px;overflow:hidden"><div class="t" style="left:4px;top:7px;font-size:12px">下偏差</div></div><div class="a" style="left:1329px;top:590px;width:75px;height:18px;overflow:hidden"><div class="t" style="left:4px;top:7px;font-size:12px">误差值</div></div><div class="a" style="left:949px;top:609px;width:75px;height:18px;overflow:hidden"><div class="t" style="left:4px;top:8px;font-size:12px">距离</div></div><div class="t" style="left:1025px;top:615px;font-size:11px;width:70px;text-align:right;color:#0000ff;letter-spacing:-.3px">1.2684(mm)</div><div class="t" style="left:1101px;top:615px;font-size:11px;width:70px;text-align:right;color:#000;letter-spacing:-.3px">0.0000(mm)</div><div class="t" style="left:1177px;top:615px;font-size:11px;width:70px;text-align:right;color:#000;letter-spacing:-.3px">0.0000(mm)</div><div class="t" style="left:1253px;top:615px;font-size:11px;width:70px;text-align:right;color:#000;letter-spacing:-.3px">0.0000(mm)</div><div class="t" style="left:1329px;top:615px;font-size:11px;width:70px;text-align:right;color:#000;letter-spacing:-.3px">1.2684(mm)</div><div class="a" style="left:1410px;top:590px;width:17px;height:149px;background:#f0f0f0"></div><svg class="a" style="left:1410px;top:590px" width="17" height="17" viewBox="0 0 17 17" ><path d="M4.500 11 L8.500 7 L12.500 11 Z" fill="#606060"/></svg><div class="a" style="left:1410px;top:608px;width:15px;height:15px;border:1px solid #979797;border-radius:2px;background:linear-gradient(90deg,#f5f5f5,#e9e9eb 45%,#d9dadc 50%,#c9cacc);box-shadow:inset 0 0 0 1px rgba(255,255,255,.8)"></div><svg class="a" style="left:1410px;top:722px" width="17" height="17" viewBox="0 0 17 17" ><path d="M5 6 L8.500 10 L12 6 Z" fill="#606060"/></svg><div class="a" style="left:659px;top:739px;width:768px;height:1px;background:#fff"></div><div class="a" style="left:661px;top:740px;width:230px;height:92px;border:1px solid;border-color:#a0a0a0 #fff #fff #a0a0a0;box-shadow:inset 1px 1px 0 #fff"></div><div class="btn" style="left:666px;top:745px;width:40px;height:27px;"></div><div class="t" style="left:666px;top:747px;width:40px;text-align:center;font-size:22px;font-family:Liberation Sans,sans-serif">X</div><div class="a" style="left:706px;top:745px;width:15px;height:27px;border:2px solid;border-color:#a0a0a0 #808080 #808080 #d8d8d8;background:#f0f0f0"></div><svg class="a" style="left:706px;top:745px" width="15" height="27" viewBox="0 0 15 27" ><path d="M4 12 H11 L7.500 16 Z" fill="#000"/></svg><div class="btn" style="left:666px;top:775px;width:40px;height:27px;"></div><div class="t" style="left:666px;top:777px;width:40px;text-align:center;font-size:22px;font-family:Liberation Sans,sans-serif">Y</div><div class="a" style="left:706px;top:775px;width:15px;height:27px;border:2px solid;border-color:#a0a0a0 #808080 #808080 #d8d8d8;background:#f0f0f0"></div><svg class="a" style="left:706px;top:775px" width="15" height="27" viewBox="0 0 15 27" ><path d="M4 12 H11 L7.500 16 Z" fill="#000"/></svg><div class="a" style="left:660px;top:805px;width:70px;height:25px;overflow:hidden"><div class="a" style="left:-660px;top:-805px"><div class="btn" style="left:666px;top:805px;width:40px;height:27px;"></div><div class="t" style="left:666px;top:807px;width:40px;text-align:center;font-size:22px;font-family:Liberation Sans,sans-serif">Z</div><div class="a" style="left:706px;top:805px;width:15px;height:27px;border:2px solid;border-color:#a0a0a0 #808080 #808080 #d8d8d8;background:#f0f0f0"></div><svg class="a" style="left:706px;top:805px" width="15" height="27" viewBox="0 0 15 27" ><path d="M4 12 H11 L7.500 16 Z" fill="#000"/></svg></div></div><div class="a" style="left:730px;top:745px;width:160px;height:85px;background:#000"></div><div class="t" style="left:748px;top:747px;font-size:22px;color:#00ff00;font-family:Liberation Sans,sans-serif;letter-spacing:.5px;-webkit-text-stroke:.3px #00ff00">0.0010</div><div class="t" style="left:748px;top:777px;font-size:22px;color:#00ff00;font-family:Liberation Sans,sans-serif;letter-spacing:.5px;-webkit-text-stroke:.3px #00ff00">0.0000</div><div class="t" style="left:748px;top:807px;font-size:22px;color:#00ff00;font-family:Liberation Sans,sans-serif;letter-spacing:.5px;-webkit-text-stroke:.3px #00ff00">0.0000</div><div class="a" style="left:661px;top:830px;width:78px;height:35px;background:#fff"></div><div class="t" style="left:663px;top:834px;font-size:11px;">Ready</div><div class="a" style="left:739px;top:833px;width:63px;height:30px;border:1px solid;border-color:#696969 #e3e3e3 #e3e3e3 #696969;background:#fff;box-shadow:inset 1px 1px 0 #a0a0a0"></div><div class="t" style="left:742px;top:839px;font-size:18px;font-family:Liberation Sans,sans-serif">S00</div><div class="btn" style="left:785px;top:835px;width:16px;height:26px;"><svg style="left:-1px;top:-1px" width="16" height="26" viewBox="0 0 16 26" ><path d="M4 11.500 H11 L7.500 15.500 Z" fill="#000"/></svg></div><div class="a" style="left:812px;top:833px;width:16px;height:30px;background:#f7f7f7"></div><svg class="a" style="left:812px;top:833px" width="16" height="30" viewBox="0 0 16 30" ><path d="M4 9 L8 5 L12 9 Z" fill="#a8a8a8"/><path d="M4.500 22 L8 26 L11.500 22 Z" fill="#a8a8a8"/></svg><div class="a" style="left:891px;top:742px;width:1px;height:124px;background:#a0a0a0"></div><div class="a" style="left:893px;top:744px;width:150px;height:120px;background:#000;overflow:hidden"></div><div class="a" style="left:893px;top:744px;width:150px;height:120px;overflow:hidden"><svg style="left:0;top:0" width="150" height="120" viewBox="0 0 150 120" shape-rendering="crispEdges"><rect x="75" y="10" width="4" height="12" fill="#ff0000"/><rect x="75" y="35" width="4" height="12" fill="#ff0000"/><rect x="75" y="60" width="4" height="12" fill="#ff0000"/><rect x="75" y="85" width="4" height="12" fill="#ff0000"/><rect x="75" y="110" width="4" height="12" fill="#ff0000"/><rect x="-8" y="60" width="12" height="4" fill="#ff0000"/><rect x="17" y="60" width="12" height="4" fill="#ff0000"/><rect x="42" y="60" width="12" height="4" fill="#ff0000"/><rect x="67" y="60" width="12" height="4" fill="#ff0000"/><rect x="92" y="60" width="12" height="4" fill="#ff0000"/><rect x="117" y="60" width="12" height="4" fill="#ff0000"/><rect x="142" y="60" width="12" height="4" fill="#ff0000"/><rect x="75" y="60" width="4" height="4" fill="#fff"/></svg></div><div class="a" style="left:1046px;top:745px;width:55px;height:86px;border:1px solid #a0a0a0;box-shadow:1px 1px 0 #fff, inset 1px 1px 0 #fff"></div><svg class="a" style="left:1055px;top:760px" width="12" height="12" viewBox="0 0 12 12" ><circle cx="6" cy="6" r="5.5" fill="#fff" stroke="#b0b0b0" stroke-width="1"/><path d="M2.1 9.9 A5.5 5.5 0 0 1 9.9 2.1" fill="none" stroke="#707070" stroke-width="1"/><circle cx="6" cy="6" r="2" fill="#000"/></svg><div class="t" style="left:1072px;top:760px;font-size:12px;letter-spacing:2px">连续</div><svg class="a" style="left:1055px;top:784px" width="12" height="12" viewBox="0 0 12 12" ><circle cx="6" cy="6" r="5.5" fill="#fff" stroke="#b0b0b0" stroke-width="1"/><path d="M2.1 9.9 A5.5 5.5 0 0 1 9.9 2.1" fill="none" stroke="#707070" stroke-width="1"/></svg><div class="t" style="left:1072px;top:784px;font-size:12px;letter-spacing:2px">步距</div><svg class="a" style="left:1055px;top:808px" width="12" height="12" viewBox="0 0 12 12" ><circle cx="6" cy="6" r="5.5" fill="#fff" stroke="#b0b0b0" stroke-width="1"/><path d="M2.1 9.9 A5.5 5.5 0 0 1 9.9 2.1" fill="none" stroke="#707070" stroke-width="1"/></svg><div class="t" style="left:1072px;top:808px;font-size:12px;letter-spacing:2px">位置</div><div class="t" style="left:1103px;top:756px;font-size:11px;color:#a0a0a0">X</div><div class="a" style="left:1114px;top:751px;width:44px;height:20px;background:#fff;border:1px solid;border-color:#696969 #e3e3e3 #e3e3e3 #696969;box-shadow:inset 1px 1px 0 #a0a0a0"></div><div class="t" style="left:1103px;top:786px;font-size:11px;color:#a0a0a0">Y</div><div class="a" style="left:1114px;top:781px;width:44px;height:20px;background:#fff;border:1px solid;border-color:#696969 #e3e3e3 #e3e3e3 #696969;box-shadow:inset 1px 1px 0 #a0a0a0"></div><div class="t" style="left:1103px;top:816px;font-size:11px;color:#a0a0a0">Z</div><div class="a" style="left:1114px;top:811px;width:44px;height:20px;background:#fff;border:1px solid;border-color:#696969 #e3e3e3 #e3e3e3 #696969;box-shadow:inset 1px 1px 0 #a0a0a0"></div><div class="a" style="left:1053px;top:840px;width:93px;height:13px;background:#fff;border:1px solid;border-color:#808080 #e3e3e3 #e3e3e3 #808080"></div><svg class="a" style="left:1111px;top:838px" width="8" height="20" viewBox="0 0 8 20" ><path d="M.500 .500 H7.500 V15 L4 19 L.500 15 Z" fill="#f0f0f0" stroke="#808080" stroke-width="1"/><path d="M1.500 1.500 V14.500" stroke="#fff" stroke-width="1"/></svg><div class="a" style="left:1057px;top:859px;width:1px;height:4px;background:#000"></div><div class="a" style="left:1085px;top:859px;width:1px;height:4px;background:#000"></div><div class="a" style="left:1114px;top:859px;width:1px;height:4px;background:#000"></div><div class="a" style="left:1142px;top:859px;width:1px;height:4px;background:#000"></div><div class="btn" style="left:1159px;top:743px;width:39px;height:39px;"><svg style="left:-1px;top:-1px" width="39" height="39" viewBox="0 0 39 39" ><path d="M11.200 22.300 H39 L28.800 32.700 H1.400 Z" fill="#80ffff"/><path d="M11.200 22.300 L1.400 32.700 H28.800 L39 22.300" fill="none" stroke="#000" stroke-width="1"/><path d="M21.900 4.700 L32.700 14.100 H27.400 V23.900 H17 V14.100 H11.700 Z" fill="#008000"/></svg></div><div class="btn" style="left:1200px;top:743px;width:39px;height:39px;"><svg style="left:-1px;top:-1px" width="39" height="39" viewBox="0 0 39 39" ><path d="M20.200 5.300 L34.700 21.900 H27.400 V34 H13.100 V21.900 H5.900 Z" fill="#008000"/></svg></div><div class="btn" style="left:1159px;top:783px;width:39px;height:39px;"><svg style="left:-1px;top:-1px" width="39" height="39" viewBox="0 0 39 39" ><path d="M5.900 21.100 L20.400 7.400 V14.100 H34 V28.400 H20.400 V34.900 Z" fill="#008000"/></svg></div><div class="btn" style="left:1200px;top:783px;width:39px;height:39px;"><svg style="left:-1px;top:-1px" width="39" height="39" viewBox="0 0 39 39" ><path d="M3 21.500 H37 M20.600 4 V38" stroke="#008000" stroke-width="1.100"/><path d="M20.600 2.300 L23 6.500 H18.200 Z M20.600 39.200 L23 35 H18.200 Z M1.400 21.500 L5.600 19.100 V23.900 Z M38.200 21.500 L34 19.100 V23.900 Z" fill="#008000"/></svg></div><div class="btn" style="left:1241px;top:783px;width:39px;height:39px;"><svg style="left:-1px;top:-1px" width="39" height="39" viewBox="0 0 39 39" ><path d="M35.200 21.100 L20.800 7.400 V14.100 H6.500 V28.400 H20.800 V34.900 Z" fill="#008000"/></svg></div><div class="btn" style="left:1159px;top:823px;width:39px;height:39px;"><svg style="left:-1px;top:-1px" width="39" height="39" viewBox="0 0 39 39" ><path d="M11.200 8 H39 L28.800 18.800 H1.400 Z" fill="#80ffff"/><path d="M11.200 8 L1.400 18.800 H28.800 L39 8 Z" fill="none" stroke="#000" stroke-width="1"/><path d="M17 17.200 H27.400 V26 H34.700 L21.900 36.200 L9.200 26 H17 Z" fill="#008000"/></svg></div><div class="btn" style="left:1200px;top:823px;width:39px;height:39px;"><svg style="left:-1px;top:-1px" width="39" height="39" viewBox="0 0 39 39" ><path d="M13.100 6.500 H27.400 V19.800 H34.700 L20.900 35.400 L6.900 19.800 H13.100 Z" fill="#008000"/></svg></div><div class="a" style="left:1286px;top:742px;width:100px;height:100px;background:#000"></div><svg class="a" style="left:1286px;top:742px" width="100" height="100" viewBox="0 0 100 100" ><circle cx="50" cy="49.8" r="49" fill="none" stroke="#7accf8" stroke-width="1.500"/><circle cx="50" cy="49.8" r="35.600" fill="none" stroke="#7accf8" stroke-width="1.500"/><circle cx="50" cy="49.8" r="10.800" fill="none" stroke="#7accf8" stroke-width="1.500"/><line x1="69.0" y1="57.7" x2="95.3" y2="68.6" stroke="#7accf8" stroke-width="1.500"/><line x1="57.9" y1="68.8" x2="68.8" y2="95.1" stroke="#7accf8" stroke-width="1.500"/><line x1="42.1" y1="68.8" x2="31.2" y2="95.1" stroke="#7accf8" stroke-width="1.500"/><line x1="31.0" y1="57.7" x2="4.7" y2="68.6" stroke="#7accf8" stroke-width="1.500"/><line x1="31.0" y1="41.9" x2="4.7" y2="31.0" stroke="#7accf8" stroke-width="1.500"/><line x1="42.1" y1="30.8" x2="31.2" y2="4.5" stroke="#7accf8" stroke-width="1.500"/><line x1="57.9" y1="30.8" x2="68.8" y2="4.5" stroke="#7accf8" stroke-width="1.500"/><line x1="69.0" y1="41.9" x2="95.3" y2="31.0" stroke="#7accf8" stroke-width="1.500"/><polygon points="69.0,57.7 57.9,68.8 42.1,68.8 31.0,57.7 31.0,41.9 42.1,30.8 57.9,30.8 69.0,41.9" fill="none" stroke="#7accf8" stroke-width="1.500"/><circle cx="92.0" cy="49.8" r="3.400" fill="#ffffc0"/><circle cx="79.7" cy="79.5" r="3.400" fill="#ffffc0"/><circle cx="50.0" cy="91.8" r="3.400" fill="#ffffc0"/><circle cx="20.3" cy="79.5" r="3.400" fill="#ffffc0"/><circle cx="8.0" cy="49.8" r="3.400" fill="#ffffc0"/><circle cx="20.3" cy="20.1" r="3.400" fill="#ffffc0"/><circle cx="50.0" cy="7.8" r="3.400" fill="#ffffc0"/><circle cx="79.7" cy="20.1" r="3.400" fill="#ffffc0"/></svg><div class="btn" style="left:1396px;top:744px;width:22px;height:22px;"><svg style="left:-1px;top:-1px" width="22" height="22" viewBox="0 0 22 22" ><circle cx="11" cy="11" r="8.500" fill="#ffe800" stroke="#806000" stroke-width="1"/><circle cx="11" cy="11" r="3.800" fill="#000"/></svg></div><div class="btn" style="left:1396px;top:769px;width:22px;height:22px;"><svg style="left:-1px;top:-1px" width="22" height="22" viewBox="0 0 22 22" ><rect x="2.500" y="2.500" width="17" height="17" fill="#ffff00" stroke="#00a000" stroke-width="1"/><circle cx="11" cy="11" r="4" fill="#000"/></svg></div><div class="btn" style="left:1396px;top:794px;width:22px;height:22px;"><svg style="left:-1px;top:-1px" width="22" height="22" viewBox="0 0 22 22" ><circle cx="11" cy="11" r="8.500" fill="#ffe800" stroke="#000" stroke-width="1"/><circle cx="11" cy="11" r="4.800" fill="#000"/><line x1="15.2" y1="12.7" x2="19.3" y2="14.4" stroke="#000" stroke-width="1"/><line x1="12.7" y1="15.2" x2="14.4" y2="19.3" stroke="#000" stroke-width="1"/><line x1="9.3" y1="15.2" x2="7.6" y2="19.3" stroke="#000" stroke-width="1"/><line x1="6.8" y1="12.7" x2="2.7" y2="14.4" stroke="#000" stroke-width="1"/><line x1="6.8" y1="9.3" x2="2.7" y2="7.6" stroke="#000" stroke-width="1"/><line x1="9.3" y1="6.8" x2="7.6" y2="2.7" stroke="#000" stroke-width="1"/><line x1="12.7" y1="6.8" x2="14.4" y2="2.7" stroke="#000" stroke-width="1"/><line x1="15.2" y1="9.3" x2="19.3" y2="7.6" stroke="#000" stroke-width="1"/></svg></div><div class="btn" style="left:1396px;top:820px;width:22px;height:22px;"><svg style="left:-1px;top:-1px" width="22" height="22" viewBox="0 0 22 22" ><circle cx="11" cy="11" r="9" fill="#000"/><circle cx="11" cy="11" r="4" fill="#ffe800"/></svg></div><div class="a" style="left:1287px;top:845px;width:99px;height:19px;background:#f6f6f6"></div><div class="btn" style="left:1287px;top:845px;width:17px;height:19px;"><svg style="left:-1px;top:-1px" width="17" height="19" viewBox="0 0 17 19" ><path d="M10 6 L6 9.500 L10 13 Z" fill="#000"/></svg></div><div class="btn" style="left:1369px;top:845px;width:17px;height:19px;"><svg style="left:-1px;top:-1px" width="17" height="19" viewBox="0 0 17 19" ><path d="M7 6 L11 9.500 L7 13 Z" fill="#000"/></svg></div><div class="btn" style="left:1318px;top:845px;width:8px;height:19px;"></div><div class="a" style="left:1388px;top:845px;width:37px;height:20px;background:#fff;border:1px solid;border-color:#696969 #e3e3e3 #e3e3e3 #696969;box-shadow:inset 1px 1px 0 #a0a0a0"></div><div class="t" style="left:1392px;top:849px;font-size:11px;">64</div><div class="a" style="left:4px;top:868px;width:1423px;height:1px;background:#a0a0a0"></div><div class="a" style="left:4px;top:869px;width:1423px;height:16px;background:#f0f0f0"></div><div class="t" style="left:6px;top:871px;font-size:12px;">命令:准备就绪</div><div class="a" style="left:355px;top:870px;width:1px;height:15px;background:#a0a0a0"></div><div class="t" style="left:358px;top:871px;font-size:12px;">十字线:『开』</div><div class="a" style="left:455px;top:870px;width:1px;height:15px;background:#a0a0a0"></div><div class="t" style="left:457px;top:871px;font-size:12px;">单位:『 mm 』</div><div class="a" style="left:535px;top:870px;width:1px;height:15px;background:#a0a0a0"></div><div class="t" style="left:537px;top:871px;font-size:12px;">对象捕获:『开启』</div><div class="a" style="left:634px;top:870px;width:1px;height:15px;background:#a0a0a0"></div><div class="t" style="left:637px;top:871px;font-size:12px;">角度:『度』</div><div class="a" style="left:735px;top:869px;width:118px;height:16px;border:1px solid;border-color:#a0a0a0 #fff #fff #a0a0a0"></div><div class="t" style="left:738px;top:871px;font-size:12px;letter-spacing:0.2px">0.0090744,0.009070</div><div class="a" style="left:855px;top:869px;width:57px;height:16px;border:1px solid;border-color:#a0a0a0 #fff #fff #a0a0a0"></div><div class="t" style="left:858px;top:871px;font-size:12px;letter-spacing:0px">夹具--关</div><div class="a" style="left:915px;top:869px;width:58px;height:16px;border:1px solid;border-color:#a0a0a0 #fff #fff #a0a0a0"></div><div class="t" style="left:918px;top:871px;font-size:12px;letter-spacing:0px">标注:开</div><div class="a" style="left:975px;top:869px;width:98px;height:16px;border:1px solid;border-color:#a0a0a0 #fff #fff #a0a0a0"></div><div class="t" style="left:978px;top:871px;font-size:12px;letter-spacing:0px">坐标:『世界坐标』</div><div class="a" style="left:1074px;top:869px;width:38px;height:16px;border:1px solid;border-color:#a0a0a0 #fff #fff #a0a0a0"></div><div class="t" style="left:1078px;top:871px;font-size:12px;letter-spacing:0px">0</div><div class="a" style="left:1115px;top:869px;width:37px;height:16px;border:1px solid;border-color:#a0a0a0 #fff #fff #a0a0a0"></div><div class="t" style="left:1118px;top:871px;font-size:12px;letter-spacing:0px">0</div><div class="a" style="left:1154px;top:869px;width:78px;height:16px;border:1px solid;border-color:#a0a0a0 #fff #fff #a0a0a0"></div><div class="t" style="left:1157px;top:871px;font-size:12px;letter-spacing:0px">激光笔:『关』</div><div class="a" style="left:1234px;top:869px;width:192px;height:16px;border:1px solid;border-color:#a0a0a0 #fff #fff #a0a0a0"></div><div class="t" style="left:1237px;top:871px;font-size:12px;letter-spacing:0px">虚拟摇杆:『关』</div></body></html>
